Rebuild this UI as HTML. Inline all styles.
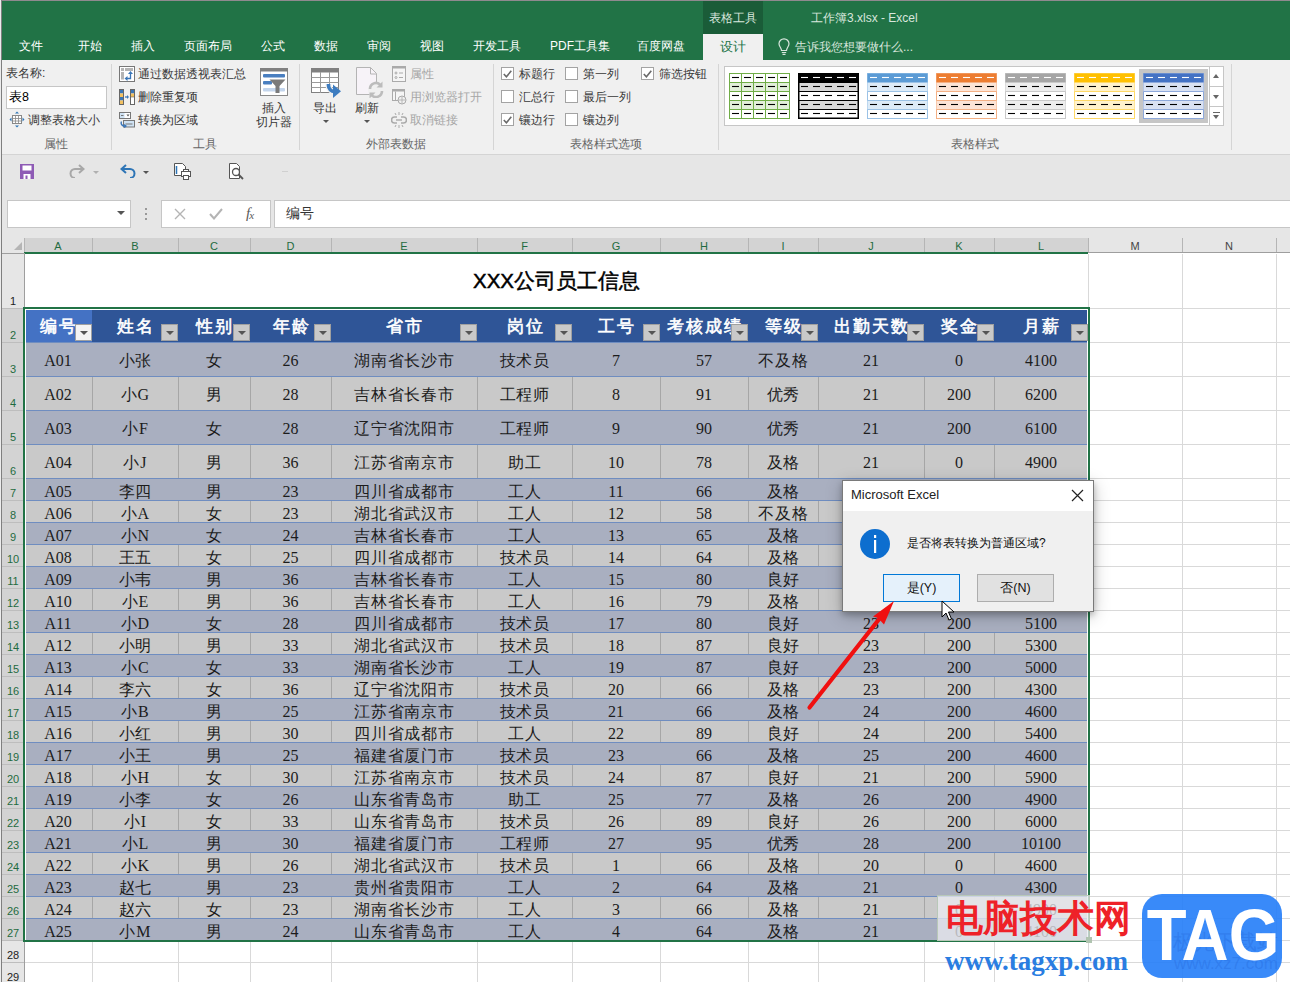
<!DOCTYPE html>
<html><head><meta charset="utf-8"><style>
*{box-sizing:border-box}
body{margin:0;width:1290px;height:982px;overflow:hidden;position:relative;background:#fff;font-family:"Liberation Sans",sans-serif;color:#262626}
.a{position:absolute}
.tab{position:absolute;top:38px;font-size:12px;color:#fff;white-space:nowrap;line-height:16px}
.rb{position:absolute;font-size:12px;color:#383838;white-space:nowrap;line-height:14px}
.gl{position:absolute;font-size:12px;color:#666;white-space:nowrap;line-height:14px}
.sep{position:absolute;top:64px;width:1px;height:86px;background:#d5d5d5}
.cb{position:absolute;width:13px;height:13px;border:1px solid #a3a3a3;background:#fff}
.rh{position:absolute;left:2px;width:22px;font-size:11px;text-align:center;line-height:12px}
.ch{position:absolute;top:239px;height:14px;font-size:11px;text-align:center;line-height:14px}
.cell{position:absolute;text-align:center;font-family:"Liberation Serif",serif;font-size:16px;color:#1c1c1c;white-space:nowrap;overflow:hidden}
.hd{position:absolute;text-align:center;font-size:16.5px;font-weight:normal;-webkit-text-stroke:0.6px #fff;color:#fff;white-space:nowrap;letter-spacing:2px}
.fb{position:absolute;width:17px;height:17px;background:#c9c9c9;border:1px solid #a0a0a0}
.fb:after{content:"";position:absolute;left:4px;top:6px;border-left:4px solid transparent;border-right:4px solid transparent;border-top:4px solid #555}
</style></head><body>

<div class="a" style="left:0;top:0;width:1290px;height:1px;background:#8f8a8f"></div>
<div class="a" style="left:0;top:0;width:1px;height:982px;background:#ececec"></div>
<div class="a" style="left:1px;top:0;width:1px;height:982px;background:#7f7f7f"></div>
<div class="a" style="left:2px;top:1px;width:1288px;height:59px;background:#217346"></div>
<div class="a" style="left:703px;top:1px;width:60px;height:33px;background:#1a5c38"></div>
<div class="a" style="left:703px;top:34px;width:60px;height:27px;background:#f0f0f0"></div>
<div class="a" style="left:703px;top:10px;width:60px;text-align:center;font-size:12px;color:#d8e6dd;line-height:16px">表格工具</div>
<div class="a" style="left:811px;top:10px;font-size:12px;color:#d8e6dd;line-height:16px;white-space:nowrap">工作簿3.xlsx - Excel</div>
<div class="tab" style="left:19px">文件</div>
<div class="tab" style="left:78px">开始</div>
<div class="tab" style="left:131px">插入</div>
<div class="tab" style="left:184px">页面布局</div>
<div class="tab" style="left:261px">公式</div>
<div class="tab" style="left:314px">数据</div>
<div class="tab" style="left:367px">审阅</div>
<div class="tab" style="left:420px">视图</div>
<div class="tab" style="left:473px">开发工具</div>
<div class="tab" style="left:550px">PDF工具集</div>
<div class="tab" style="left:637px">百度网盘</div>
<div class="a" style="left:703px;top:39px;width:60px;text-align:center;font-size:12.5px;color:#217346;line-height:16px">设计</div>
<svg class="a" style="left:777px;top:38px" width="14" height="18" viewBox="0 0 14 18"><path d="M4.5 12.5 C4.5 10 2 8.5 2 5.8 A5 5 0 0 1 12 5.8 C12 8.5 9.5 10 9.5 12.5 Z" fill="none" stroke="#d8e6dd" stroke-width="1.2"/><path d="M4.8 14.5h4.4M5.5 16.3h3" stroke="#d8e6dd" stroke-width="1.2"/></svg>
<div class="a" style="left:795px;top:39px;font-size:12px;color:#d8e6dd;line-height:16px;white-space:nowrap">告诉我您想要做什么...</div>
<div class="a" style="left:2px;top:60px;width:1288px;height:94px;background:#f0f0f0"></div>
<div class="a" style="left:2px;top:154px;width:1288px;height:1px;background:#d4d4d4"></div>
<div class="rb" style="left:6px;top:66px">表名称:</div>
<div class="a" style="left:6px;top:86px;width:101px;height:23px;background:#fff;border:1px solid #c6c6c6"></div>
<div class="a" style="left:9px;top:90px;font-size:12.5px;color:#000;line-height:14px">表8</div>
<svg class="a" style="left:9px;top:111px" width="16" height="17" viewBox="0 0 16 17"><rect x="3.5" y="4.5" width="9" height="8" fill="#fff" stroke="#888"/><path d="M3.5 7.5h9M3.5 10h9M6.5 4.5v8M9.5 4.5v8" stroke="#888" stroke-width="0.8"/><path d="M8 0.5l-2 2h4zM8 16.5l-2-2h4zM0.5 8.5l2-2v4zM15.5 8.5l-2-2v4z" fill="#2e75b6"/></svg>
<div class="rb" style="left:28px;top:113px">调整表格大小</div>
<div class="gl" style="left:44px;top:137px">属性</div>
<div class="sep" style="left:111px"></div>
<svg class="a" style="left:119px;top:66px" width="16" height="16" viewBox="0 0 16 16"><rect x="0.5" y="0.5" width="15" height="15" fill="#fff" stroke="#777"/><rect x="2" y="2" width="3" height="3" fill="#b4b4b4"/><rect x="6" y="2" width="8" height="3" fill="#b4b4b4"/><rect x="2" y="6" width="3" height="7.5" fill="#b4b4b4"/><path d="M7.5 12.5h4v-5" stroke="#3a76b8" stroke-width="1.3" fill="none"/><path d="M5.5 12.5l3-2.5v5z" fill="#3a76b8"/><path d="M11.5 5l-2.5 3h5z" fill="#3a76b8"/></svg>
<div class="rb" style="left:138px;top:67px">通过数据透视表汇总</div>
<svg class="a" style="left:119px;top:89px" width="16" height="16" viewBox="0 0 16 16"><rect x="0.5" y="0.5" width="4" height="15" fill="#fff" stroke="#666"/><rect x="1" y="1" width="3" height="3.5" fill="#3a76b8"/><rect x="1" y="4.5" width="3" height="3.5" fill="#f2c060"/><rect x="1" y="8" width="3" height="3.5" fill="#3a76b8"/><rect x="1" y="11.5" width="3" height="3.5" fill="#f2c060"/><rect x="11.5" y="0.5" width="4" height="15" fill="#fff" stroke="#666"/><rect x="12" y="1" width="3" height="3.5" fill="#3a76b8"/><rect x="12" y="4.5" width="3" height="3.5" fill="#f2c060"/><path d="M11.5 8h4" stroke="#666" stroke-width="0.6"/><path d="M6 8h3" stroke="#3a76b8" stroke-width="1.3"/><path d="M10 8l-2-2v4z" fill="#3a76b8"/></svg>
<div class="rb" style="left:138px;top:90px">删除重复项</div>
<svg class="a" style="left:119px;top:112px" width="16" height="16" viewBox="0 0 16 16"><rect x="0.5" y="0.5" width="11" height="6" fill="#fff" stroke="#777"/><rect x="1" y="1" width="4.5" height="5" fill="#cfe2f3"/><path d="M2 3.5h2.5" stroke="#777"/><path d="M7.5 2.5h3l-1.5 2z" fill="#555"/><rect x="4.5" y="8.5" width="11" height="6.5" fill="#cfe2f3" stroke="#777"/><path d="M6.5 12h7" stroke="#777"/><path d="M2.5 9.5a3 3 0 0 0 2.5 4.5h1" stroke="#3a76b8" stroke-width="1.4" fill="none"/><path d="M8 14l-2.8-2.3v4.6z" fill="#3a76b8"/></svg>
<div class="rb" style="left:138px;top:113px">转换为区域</div>
<svg class="a" style="left:260px;top:68px" width="28" height="28" viewBox="0 0 28 28"><rect x="0.5" y="0.5" width="27" height="27" fill="#fff" stroke="#888"/><rect x="0" y="0" width="28" height="3.5" fill="#808080"/><rect x="3" y="6" width="22" height="3.5" rx="1" fill="#4a7fc0"/><rect x="3" y="13" width="9" height="3.5" rx="1" fill="#4a7fc0"/><rect x="3" y="20" width="22" height="3.5" rx="1" fill="#c3d5ec"/><path d="M9.5 11.5h16l-6 6.5v7h-4v-7z" fill="#7a7a7a"/></svg>
<div class="rb" style="left:262px;top:101px">插入</div>
<div class="rb" style="left:256px;top:115px">切片器</div>
<div class="gl" style="left:193px;top:137px">工具</div>
<div class="sep" style="left:299px"></div>
<svg class="a" style="left:311px;top:68px" width="31" height="31" viewBox="0 0 31 31"><rect x="0.5" y="0.5" width="27" height="24" fill="#fff" stroke="#808080"/><rect x="0" y="0" width="28" height="4.5" fill="#808080"/><path d="M0.5 9.5h27M0.5 14.5h27M0.5 19.5h27M9.5 4v21M18.5 4v21" stroke="#9a9a9a"/><path d="M17.5 16v1.5a6 6 0 0 0 6 6h2" stroke="#f0f0f0" stroke-width="6" fill="none"/><path d="M17.5 16v1.5a6 6 0 0 0 6 6h2" stroke="#3d7cc0" stroke-width="3.6" fill="none"/><path d="M22 16.5L30 23.3L22 30z" fill="#3d7cc0"/></svg>
<div class="rb" style="left:313px;top:101px;color:#333">导出</div>
<div class="a" style="left:323px;top:120px;border-left:3px solid transparent;border-right:3px solid transparent;border-top:3px solid #555"></div>
<svg class="a" style="left:356px;top:67px" width="30" height="31" viewBox="0 0 30 31"><path d="M0.5 0.5h14l6 6v21h-20z" fill="#f7f3f8" stroke="#b4b4b4"/><path d="M14.5 0.5v6.5h6" fill="none" stroke="#b4b4b4"/><circle cx="20" cy="23" r="8" fill="#f0f0f0"/><path d="M14 22a6 6 0 0 1 10.5-4M26 24a6 6 0 0 1-10.5 4" stroke="#bcbcbc" stroke-width="2.6" fill="none"/><path d="M26.5 14.5v6h-6zM13.5 31.5v-6h6z" fill="#bcbcbc"/></svg>
<div class="rb" style="left:355px;top:101px;color:#333">刷新</div>
<div class="a" style="left:364px;top:120px;border-left:3px solid transparent;border-right:3px solid transparent;border-top:3px solid #555"></div>
<svg class="a" style="left:392px;top:66px" width="14" height="16" viewBox="0 0 14 16"><rect x="0.5" y="0.5" width="13" height="15" fill="#f5f5f5" stroke="#aaa"/><rect x="0.5" y="0.5" width="13" height="2" fill="#aaa"/><circle cx="4" cy="7" r="1" fill="none" stroke="#aaa"/><circle cx="4" cy="11.5" r="1" fill="none" stroke="#aaa"/><path d="M7 7h4M7 11.5h4" stroke="#aaa"/></svg>
<div class="rb" style="left:410px;top:67px;color:#a6a6a6">属性</div>
<svg class="a" style="left:392px;top:89px" width="15" height="16" viewBox="0 0 15 16"><rect x="0.5" y="0.5" width="12" height="11" fill="#f5f5f5" stroke="#aaa"/><rect x="0.5" y="0.5" width="12" height="2" fill="#aaa"/><path d="M3.5 2.5v9" stroke="#aaa"/><circle cx="10" cy="11" r="4" fill="#f0f0f0" stroke="#aaa"/><path d="M6.5 11h7M10 7.5v7" stroke="#aaa" stroke-width="0.8"/></svg>
<div class="rb" style="left:410px;top:90px;color:#a6a6a6">用浏览器打开</div>
<svg class="a" style="left:391px;top:112px" width="16" height="16" viewBox="0 0 16 16"><path d="M6 5H3.5a3 3 0 0 0 0 6H6M10 5h2.5a3 3 0 0 1 0 6H10" stroke="#aaa" stroke-width="1.6" fill="none"/><path d="M5 8h6" stroke="#aaa" stroke-width="1.4"/><path d="M8 0v3M8 13v3M4 1l1 2M12 1l-1 2M4 15l1-2M12 15l-1-2" stroke="#aaa"/></svg>
<div class="rb" style="left:410px;top:113px;color:#a6a6a6">取消链接</div>
<div class="gl" style="left:366px;top:137px">外部表数据</div>
<div class="sep" style="left:493px"></div>
<div class="cb" style="left:501px;top:67px"></div>
<svg class="a" style="left:503px;top:70px" width="9" height="8" viewBox="0 0 9 8"><path d="M0.8 4l2.6 2.8L8.3 0.8" stroke="#6a6a6a" stroke-width="1.6" fill="none"/></svg>
<div class="rb" style="left:519px;top:67px">标题行</div>
<div class="cb" style="left:501px;top:90px"></div>
<div class="rb" style="left:519px;top:90px">汇总行</div>
<div class="cb" style="left:501px;top:113px"></div>
<svg class="a" style="left:503px;top:116px" width="9" height="8" viewBox="0 0 9 8"><path d="M0.8 4l2.6 2.8L8.3 0.8" stroke="#6a6a6a" stroke-width="1.6" fill="none"/></svg>
<div class="rb" style="left:519px;top:113px">镶边行</div>
<div class="cb" style="left:565px;top:67px"></div>
<div class="rb" style="left:583px;top:67px">第一列</div>
<div class="cb" style="left:565px;top:90px"></div>
<div class="rb" style="left:583px;top:90px">最后一列</div>
<div class="cb" style="left:565px;top:113px"></div>
<div class="rb" style="left:583px;top:113px">镶边列</div>
<div class="cb" style="left:641px;top:67px"></div>
<svg class="a" style="left:643px;top:70px" width="9" height="8" viewBox="0 0 9 8"><path d="M0.8 4l2.6 2.8L8.3 0.8" stroke="#6a6a6a" stroke-width="1.6" fill="none"/></svg>
<div class="rb" style="left:659px;top:67px">筛选按钮</div>
<div class="gl" style="left:570px;top:137px">表格样式选项</div>
<div class="sep" style="left:718px"></div>
<div class="a" style="left:724px;top:66px;width:486px;height:60px;background:#fff;border:1px solid #c6c6c6"></div>
<div class="a" style="left:1139px;top:69px;width:69px;height:54px;background:#c6c6c6"></div>
<svg class="a" style="left:729px;top:73px" width="61" height="46" viewBox="0 0 61 46"><rect x="0.5" y="0.5" width="60" height="45" fill="#fff" stroke="#70ad47"/><path d="M3 4.5h7" stroke="#000" stroke-width="1.1"/><path d="M15 4.5h7" stroke="#000" stroke-width="1.1"/><path d="M27 4.5h7" stroke="#000" stroke-width="1.1"/><path d="M39 4.5h7" stroke="#000" stroke-width="1.1"/><path d="M51 4.5h7" stroke="#000" stroke-width="1.1"/><rect x="0.5" y="9.5" width="60" height="9" fill="#e2efda"/><path d="M0.5 9.5h60" stroke="#70ad47"/><path d="M3 13.5h7" stroke="#000" stroke-width="1.1"/><path d="M15 13.5h7" stroke="#000" stroke-width="1.1"/><path d="M27 13.5h7" stroke="#000" stroke-width="1.1"/><path d="M39 13.5h7" stroke="#000" stroke-width="1.1"/><path d="M51 13.5h7" stroke="#000" stroke-width="1.1"/><path d="M0.5 18.5h60" stroke="#70ad47"/><path d="M3 22.5h7" stroke="#000" stroke-width="1.1"/><path d="M15 22.5h7" stroke="#000" stroke-width="1.1"/><path d="M27 22.5h7" stroke="#000" stroke-width="1.1"/><path d="M39 22.5h7" stroke="#000" stroke-width="1.1"/><path d="M51 22.5h7" stroke="#000" stroke-width="1.1"/><rect x="0.5" y="27.5" width="60" height="9" fill="#e2efda"/><path d="M0.5 27.5h60" stroke="#70ad47"/><path d="M3 31.5h7" stroke="#000" stroke-width="1.1"/><path d="M15 31.5h7" stroke="#000" stroke-width="1.1"/><path d="M27 31.5h7" stroke="#000" stroke-width="1.1"/><path d="M39 31.5h7" stroke="#000" stroke-width="1.1"/><path d="M51 31.5h7" stroke="#000" stroke-width="1.1"/><path d="M0.5 36.5h60" stroke="#70ad47"/><path d="M3 40.5h7" stroke="#000" stroke-width="1.1"/><path d="M15 40.5h7" stroke="#000" stroke-width="1.1"/><path d="M27 40.5h7" stroke="#000" stroke-width="1.1"/><path d="M39 40.5h7" stroke="#000" stroke-width="1.1"/><path d="M51 40.5h7" stroke="#000" stroke-width="1.1"/><path d="M12.5 0v46" stroke="#70ad47"/><path d="M24.5 0v46" stroke="#70ad47"/><path d="M36.5 0v46" stroke="#70ad47"/><path d="M48.5 0v46" stroke="#70ad47"/><rect x="0.5" y="0.5" width="60" height="45" fill="none" stroke="#70ad47"/></svg>
<svg class="a" style="left:798px;top:73px" width="61" height="46" viewBox="0 0 61 46"><rect x="0.5" y="0.5" width="60" height="45" fill="#fff" stroke="#000"/><rect x="0.5" y="0.5" width="60" height="9" fill="#000000"/><path d="M3 4.5h7" stroke="#fff" stroke-width="1.1"/><path d="M15 4.5h7" stroke="#fff" stroke-width="1.1"/><path d="M27 4.5h7" stroke="#fff" stroke-width="1.1"/><path d="M39 4.5h7" stroke="#fff" stroke-width="1.1"/><path d="M51 4.5h7" stroke="#fff" stroke-width="1.1"/><rect x="0.5" y="9.5" width="60" height="9" fill="#d9d9d9"/><path d="M0.5 9.5h60" stroke="#000"/><path d="M3 13.5h7" stroke="#000" stroke-width="1.1"/><path d="M15 13.5h7" stroke="#000" stroke-width="1.1"/><path d="M27 13.5h7" stroke="#000" stroke-width="1.1"/><path d="M39 13.5h7" stroke="#000" stroke-width="1.1"/><path d="M51 13.5h7" stroke="#000" stroke-width="1.1"/><path d="M0.5 18.5h60" stroke="#000"/><path d="M3 22.5h7" stroke="#000" stroke-width="1.1"/><path d="M15 22.5h7" stroke="#000" stroke-width="1.1"/><path d="M27 22.5h7" stroke="#000" stroke-width="1.1"/><path d="M39 22.5h7" stroke="#000" stroke-width="1.1"/><path d="M51 22.5h7" stroke="#000" stroke-width="1.1"/><rect x="0.5" y="27.5" width="60" height="9" fill="#d9d9d9"/><path d="M0.5 27.5h60" stroke="#000"/><path d="M3 31.5h7" stroke="#000" stroke-width="1.1"/><path d="M15 31.5h7" stroke="#000" stroke-width="1.1"/><path d="M27 31.5h7" stroke="#000" stroke-width="1.1"/><path d="M39 31.5h7" stroke="#000" stroke-width="1.1"/><path d="M51 31.5h7" stroke="#000" stroke-width="1.1"/><path d="M0.5 36.5h60" stroke="#000"/><path d="M3 40.5h7" stroke="#000" stroke-width="1.1"/><path d="M15 40.5h7" stroke="#000" stroke-width="1.1"/><path d="M27 40.5h7" stroke="#000" stroke-width="1.1"/><path d="M39 40.5h7" stroke="#000" stroke-width="1.1"/><path d="M51 40.5h7" stroke="#000" stroke-width="1.1"/><rect x="0.75" y="0.75" width="59.5" height="44.5" fill="none" stroke="#000" stroke-width="1.5"/></svg>
<svg class="a" style="left:867px;top:73px" width="61" height="46" viewBox="0 0 61 46"><rect x="0.5" y="0.5" width="60" height="45" fill="#fff" stroke="#9bc2e6"/><rect x="0.5" y="0.5" width="60" height="9" fill="#5b9bd5"/><path d="M3 4.5h7" stroke="#fff" stroke-width="1.1"/><path d="M15 4.5h7" stroke="#fff" stroke-width="1.1"/><path d="M27 4.5h7" stroke="#fff" stroke-width="1.1"/><path d="M39 4.5h7" stroke="#fff" stroke-width="1.1"/><path d="M51 4.5h7" stroke="#fff" stroke-width="1.1"/><rect x="0.5" y="9.5" width="60" height="9" fill="#ddebf7"/><path d="M0.5 9.5h60" stroke="#9bc2e6"/><path d="M3 13.5h7" stroke="#000" stroke-width="1.1"/><path d="M15 13.5h7" stroke="#000" stroke-width="1.1"/><path d="M27 13.5h7" stroke="#000" stroke-width="1.1"/><path d="M39 13.5h7" stroke="#000" stroke-width="1.1"/><path d="M51 13.5h7" stroke="#000" stroke-width="1.1"/><path d="M0.5 18.5h60" stroke="#9bc2e6"/><path d="M3 22.5h7" stroke="#000" stroke-width="1.1"/><path d="M15 22.5h7" stroke="#000" stroke-width="1.1"/><path d="M27 22.5h7" stroke="#000" stroke-width="1.1"/><path d="M39 22.5h7" stroke="#000" stroke-width="1.1"/><path d="M51 22.5h7" stroke="#000" stroke-width="1.1"/><rect x="0.5" y="27.5" width="60" height="9" fill="#ddebf7"/><path d="M0.5 27.5h60" stroke="#9bc2e6"/><path d="M3 31.5h7" stroke="#000" stroke-width="1.1"/><path d="M15 31.5h7" stroke="#000" stroke-width="1.1"/><path d="M27 31.5h7" stroke="#000" stroke-width="1.1"/><path d="M39 31.5h7" stroke="#000" stroke-width="1.1"/><path d="M51 31.5h7" stroke="#000" stroke-width="1.1"/><path d="M0.5 36.5h60" stroke="#9bc2e6"/><path d="M3 40.5h7" stroke="#000" stroke-width="1.1"/><path d="M15 40.5h7" stroke="#000" stroke-width="1.1"/><path d="M27 40.5h7" stroke="#000" stroke-width="1.1"/><path d="M39 40.5h7" stroke="#000" stroke-width="1.1"/><path d="M51 40.5h7" stroke="#000" stroke-width="1.1"/></svg>
<svg class="a" style="left:936px;top:73px" width="61" height="46" viewBox="0 0 61 46"><rect x="0.5" y="0.5" width="60" height="45" fill="#fff" stroke="#f4b084"/><rect x="0.5" y="0.5" width="60" height="9" fill="#ed7d31"/><path d="M3 4.5h7" stroke="#fff" stroke-width="1.1"/><path d="M15 4.5h7" stroke="#fff" stroke-width="1.1"/><path d="M27 4.5h7" stroke="#fff" stroke-width="1.1"/><path d="M39 4.5h7" stroke="#fff" stroke-width="1.1"/><path d="M51 4.5h7" stroke="#fff" stroke-width="1.1"/><rect x="0.5" y="9.5" width="60" height="9" fill="#fce4d6"/><path d="M0.5 9.5h60" stroke="#f4b084"/><path d="M3 13.5h7" stroke="#000" stroke-width="1.1"/><path d="M15 13.5h7" stroke="#000" stroke-width="1.1"/><path d="M27 13.5h7" stroke="#000" stroke-width="1.1"/><path d="M39 13.5h7" stroke="#000" stroke-width="1.1"/><path d="M51 13.5h7" stroke="#000" stroke-width="1.1"/><path d="M0.5 18.5h60" stroke="#f4b084"/><path d="M3 22.5h7" stroke="#000" stroke-width="1.1"/><path d="M15 22.5h7" stroke="#000" stroke-width="1.1"/><path d="M27 22.5h7" stroke="#000" stroke-width="1.1"/><path d="M39 22.5h7" stroke="#000" stroke-width="1.1"/><path d="M51 22.5h7" stroke="#000" stroke-width="1.1"/><rect x="0.5" y="27.5" width="60" height="9" fill="#fce4d6"/><path d="M0.5 27.5h60" stroke="#f4b084"/><path d="M3 31.5h7" stroke="#000" stroke-width="1.1"/><path d="M15 31.5h7" stroke="#000" stroke-width="1.1"/><path d="M27 31.5h7" stroke="#000" stroke-width="1.1"/><path d="M39 31.5h7" stroke="#000" stroke-width="1.1"/><path d="M51 31.5h7" stroke="#000" stroke-width="1.1"/><path d="M0.5 36.5h60" stroke="#f4b084"/><path d="M3 40.5h7" stroke="#000" stroke-width="1.1"/><path d="M15 40.5h7" stroke="#000" stroke-width="1.1"/><path d="M27 40.5h7" stroke="#000" stroke-width="1.1"/><path d="M39 40.5h7" stroke="#000" stroke-width="1.1"/><path d="M51 40.5h7" stroke="#000" stroke-width="1.1"/></svg>
<svg class="a" style="left:1005px;top:73px" width="61" height="46" viewBox="0 0 61 46"><rect x="0.5" y="0.5" width="60" height="45" fill="#fff" stroke="#c9c9c9"/><rect x="0.5" y="0.5" width="60" height="9" fill="#a5a5a5"/><path d="M3 4.5h7" stroke="#fff" stroke-width="1.1"/><path d="M15 4.5h7" stroke="#fff" stroke-width="1.1"/><path d="M27 4.5h7" stroke="#fff" stroke-width="1.1"/><path d="M39 4.5h7" stroke="#fff" stroke-width="1.1"/><path d="M51 4.5h7" stroke="#fff" stroke-width="1.1"/><rect x="0.5" y="9.5" width="60" height="9" fill="#ededed"/><path d="M0.5 9.5h60" stroke="#c9c9c9"/><path d="M3 13.5h7" stroke="#000" stroke-width="1.1"/><path d="M15 13.5h7" stroke="#000" stroke-width="1.1"/><path d="M27 13.5h7" stroke="#000" stroke-width="1.1"/><path d="M39 13.5h7" stroke="#000" stroke-width="1.1"/><path d="M51 13.5h7" stroke="#000" stroke-width="1.1"/><path d="M0.5 18.5h60" stroke="#c9c9c9"/><path d="M3 22.5h7" stroke="#000" stroke-width="1.1"/><path d="M15 22.5h7" stroke="#000" stroke-width="1.1"/><path d="M27 22.5h7" stroke="#000" stroke-width="1.1"/><path d="M39 22.5h7" stroke="#000" stroke-width="1.1"/><path d="M51 22.5h7" stroke="#000" stroke-width="1.1"/><rect x="0.5" y="27.5" width="60" height="9" fill="#ededed"/><path d="M0.5 27.5h60" stroke="#c9c9c9"/><path d="M3 31.5h7" stroke="#000" stroke-width="1.1"/><path d="M15 31.5h7" stroke="#000" stroke-width="1.1"/><path d="M27 31.5h7" stroke="#000" stroke-width="1.1"/><path d="M39 31.5h7" stroke="#000" stroke-width="1.1"/><path d="M51 31.5h7" stroke="#000" stroke-width="1.1"/><path d="M0.5 36.5h60" stroke="#c9c9c9"/><path d="M3 40.5h7" stroke="#000" stroke-width="1.1"/><path d="M15 40.5h7" stroke="#000" stroke-width="1.1"/><path d="M27 40.5h7" stroke="#000" stroke-width="1.1"/><path d="M39 40.5h7" stroke="#000" stroke-width="1.1"/><path d="M51 40.5h7" stroke="#000" stroke-width="1.1"/></svg>
<svg class="a" style="left:1074px;top:73px" width="61" height="46" viewBox="0 0 61 46"><rect x="0.5" y="0.5" width="60" height="45" fill="#fff" stroke="#ffd966"/><rect x="0.5" y="0.5" width="60" height="9" fill="#ffc000"/><path d="M3 4.5h7" stroke="#fff" stroke-width="1.1"/><path d="M15 4.5h7" stroke="#fff" stroke-width="1.1"/><path d="M27 4.5h7" stroke="#fff" stroke-width="1.1"/><path d="M39 4.5h7" stroke="#fff" stroke-width="1.1"/><path d="M51 4.5h7" stroke="#fff" stroke-width="1.1"/><rect x="0.5" y="9.5" width="60" height="9" fill="#fff2cc"/><path d="M0.5 9.5h60" stroke="#ffd966"/><path d="M3 13.5h7" stroke="#000" stroke-width="1.1"/><path d="M15 13.5h7" stroke="#000" stroke-width="1.1"/><path d="M27 13.5h7" stroke="#000" stroke-width="1.1"/><path d="M39 13.5h7" stroke="#000" stroke-width="1.1"/><path d="M51 13.5h7" stroke="#000" stroke-width="1.1"/><path d="M0.5 18.5h60" stroke="#ffd966"/><path d="M3 22.5h7" stroke="#000" stroke-width="1.1"/><path d="M15 22.5h7" stroke="#000" stroke-width="1.1"/><path d="M27 22.5h7" stroke="#000" stroke-width="1.1"/><path d="M39 22.5h7" stroke="#000" stroke-width="1.1"/><path d="M51 22.5h7" stroke="#000" stroke-width="1.1"/><rect x="0.5" y="27.5" width="60" height="9" fill="#fff2cc"/><path d="M0.5 27.5h60" stroke="#ffd966"/><path d="M3 31.5h7" stroke="#000" stroke-width="1.1"/><path d="M15 31.5h7" stroke="#000" stroke-width="1.1"/><path d="M27 31.5h7" stroke="#000" stroke-width="1.1"/><path d="M39 31.5h7" stroke="#000" stroke-width="1.1"/><path d="M51 31.5h7" stroke="#000" stroke-width="1.1"/><path d="M0.5 36.5h60" stroke="#ffd966"/><path d="M3 40.5h7" stroke="#000" stroke-width="1.1"/><path d="M15 40.5h7" stroke="#000" stroke-width="1.1"/><path d="M27 40.5h7" stroke="#000" stroke-width="1.1"/><path d="M39 40.5h7" stroke="#000" stroke-width="1.1"/><path d="M51 40.5h7" stroke="#000" stroke-width="1.1"/></svg>
<svg class="a" style="left:1143px;top:73px" width="61" height="46" viewBox="0 0 61 46"><rect x="0.5" y="0.5" width="60" height="45" fill="#fff" stroke="#8ea9db"/><rect x="0.5" y="0.5" width="60" height="9" fill="#4472c4"/><path d="M3 4.5h7" stroke="#fff" stroke-width="1.1"/><path d="M15 4.5h7" stroke="#fff" stroke-width="1.1"/><path d="M27 4.5h7" stroke="#fff" stroke-width="1.1"/><path d="M39 4.5h7" stroke="#fff" stroke-width="1.1"/><path d="M51 4.5h7" stroke="#fff" stroke-width="1.1"/><rect x="0.5" y="9.5" width="60" height="9" fill="#d9e1f2"/><path d="M0.5 9.5h60" stroke="#8ea9db"/><path d="M3 13.5h7" stroke="#000" stroke-width="1.1"/><path d="M15 13.5h7" stroke="#000" stroke-width="1.1"/><path d="M27 13.5h7" stroke="#000" stroke-width="1.1"/><path d="M39 13.5h7" stroke="#000" stroke-width="1.1"/><path d="M51 13.5h7" stroke="#000" stroke-width="1.1"/><path d="M0.5 18.5h60" stroke="#8ea9db"/><path d="M3 22.5h7" stroke="#000" stroke-width="1.1"/><path d="M15 22.5h7" stroke="#000" stroke-width="1.1"/><path d="M27 22.5h7" stroke="#000" stroke-width="1.1"/><path d="M39 22.5h7" stroke="#000" stroke-width="1.1"/><path d="M51 22.5h7" stroke="#000" stroke-width="1.1"/><rect x="0.5" y="27.5" width="60" height="9" fill="#d9e1f2"/><path d="M0.5 27.5h60" stroke="#8ea9db"/><path d="M3 31.5h7" stroke="#000" stroke-width="1.1"/><path d="M15 31.5h7" stroke="#000" stroke-width="1.1"/><path d="M27 31.5h7" stroke="#000" stroke-width="1.1"/><path d="M39 31.5h7" stroke="#000" stroke-width="1.1"/><path d="M51 31.5h7" stroke="#000" stroke-width="1.1"/><path d="M0.5 36.5h60" stroke="#8ea9db"/><path d="M3 40.5h7" stroke="#000" stroke-width="1.1"/><path d="M15 40.5h7" stroke="#000" stroke-width="1.1"/><path d="M27 40.5h7" stroke="#000" stroke-width="1.1"/><path d="M39 40.5h7" stroke="#000" stroke-width="1.1"/><path d="M51 40.5h7" stroke="#000" stroke-width="1.1"/></svg>
<div class="a" style="left:1209px;top:66px;width:15px;height:60px;background:#fff;border:1px solid #c6c6c6"></div>
<div class="a" style="left:1209px;top:86px;width:15px;height:1px;background:#c6c6c6"></div>
<div class="a" style="left:1209px;top:106px;width:15px;height:1px;background:#c6c6c6"></div>
<div class="a" style="left:1213px;top:74px;border-left:3.5px solid transparent;border-right:3.5px solid transparent;border-bottom:4px solid #666"></div>
<div class="a" style="left:1213px;top:95px;border-left:3.5px solid transparent;border-right:3.5px solid transparent;border-top:4px solid #666"></div>
<div class="a" style="left:1213px;top:112px;width:7px;height:1px;background:#666"></div>
<div class="a" style="left:1213px;top:115px;border-left:3.5px solid transparent;border-right:3.5px solid transparent;border-top:4px solid #666"></div>
<div class="sep" style="left:1231px"></div>
<div class="gl" style="left:951px;top:137px">表格样式</div>
<div class="a" style="left:2px;top:155px;width:1288px;height:83px;background:#e6e6e6"></div>
<svg class="a" style="left:20px;top:164px" width="14" height="15" viewBox="0 0 14 15"><path d="M0 0h14v15H0z" fill="#8e5bb5"/><rect x="2.5" y="1.5" width="9" height="5" fill="#fff"/><rect x="3.5" y="10" width="7" height="5" fill="#fff"/><rect x="5.5" y="11.5" width="2" height="3.5" fill="#8e5bb5"/></svg>
<svg class="a" style="left:69px;top:164px" width="16" height="14" viewBox="0 0 16 14"><path d="M14 5H6a4.5 4.5 0 0 0 0 9" stroke="#a8a8a8" stroke-width="2" fill="none"/><path d="M10 1l4.5 4-4.5 4" stroke="#a8a8a8" stroke-width="2" fill="none"/></svg>
<div class="a" style="left:93px;top:171px;border-left:3px solid transparent;border-right:3px solid transparent;border-top:3px solid #b0b0b0"></div>
<svg class="a" style="left:120px;top:164px" width="16" height="14" viewBox="0 0 16 14"><path d="M2 5h8a4.5 4.5 0 0 1 0 9" stroke="#2e75b6" stroke-width="2" fill="none"/><path d="M6 1L1.5 5 6 9" stroke="#2e75b6" stroke-width="2" fill="none"/></svg>
<div class="a" style="left:143px;top:171px;border-left:3px solid transparent;border-right:3px solid transparent;border-top:3px solid #555"></div>
<svg class="a" style="left:174px;top:163px" width="17" height="17" viewBox="0 0 17 17"><path d="M0.5 0.5h8l3 3v9h-11z" fill="#fff" stroke="#555"/><path d="M2.5 3v8" stroke="#2e75b6" stroke-width="1.5"/><rect x="7.5" y="8.5" width="9" height="5" fill="#fff" stroke="#555"/><rect x="9.5" y="6.5" width="5" height="2" fill="#fff" stroke="#555"/><rect x="9.5" y="12.5" width="5" height="4" fill="#fff" stroke="#555"/></svg>
<svg class="a" style="left:229px;top:163px" width="15" height="17" viewBox="0 0 15 17"><path d="M0.5 0.5h7l3 3v12h-10z" fill="#fff" stroke="#555"/><circle cx="7" cy="9" r="3.5" fill="#fff" stroke="#555" stroke-width="1.3"/><path d="M9.5 11.5l4.5 4.5" stroke="#555" stroke-width="1.8"/></svg>
<div class="a" style="left:282px;top:171px;width:6px;height:1px;background:#d0d0d0"></div>
<div class="a" style="left:7px;top:200px;width:124px;height:28px;background:#fff;border:1px solid #c6c6c6"></div>
<div class="a" style="left:117px;top:211px;border-left:4px solid transparent;border-right:4px solid transparent;border-top:4px solid #555"></div>
<div class="a" style="left:145px;top:208px;width:2px;height:2px;background:#999"></div>
<div class="a" style="left:145px;top:213px;width:2px;height:2px;background:#999"></div>
<div class="a" style="left:145px;top:218px;width:2px;height:2px;background:#999"></div>
<div class="a" style="left:161px;top:200px;width:110px;height:28px;background:#fff;border:1px solid #c6c6c6"></div>
<svg class="a" style="left:174px;top:208px" width="12" height="12" viewBox="0 0 12 12"><path d="M1 1l10 10M11 1L1 11" stroke="#b4b4b4" stroke-width="1.4"/></svg>
<svg class="a" style="left:209px;top:208px" width="14" height="12" viewBox="0 0 14 12"><path d="M1 6l4 4.5L13 1" stroke="#b4b4b4" stroke-width="2" fill="none"/></svg>
<div class="a" style="left:246px;top:204px;font-family:'Liberation Serif',serif;font-style:italic;font-size:15px;color:#5a5a5a;line-height:18px">f<span style="font-size:11px;position:relative;top:1px;left:-1px">x</span></div>
<div class="a" style="left:274px;top:200px;width:1016px;height:28px;background:#fff;border:1px solid #c6c6c6;border-right:none"></div>
<div class="a" style="left:286px;top:204px;font-size:14px;color:#333;line-height:18px">编号</div>
<div class="a" style="left:2px;top:238px;width:1288px;height:15px;background:#e6e6e6"></div>
<div class="a" style="left:25px;top:238px;width:1063px;height:14px;background:#d3d3d3"></div>
<div class="a" style="left:14px;top:242px;width:0;height:0;border-left:8px solid transparent;border-bottom:8px solid #b5b5b5"></div>
<div class="ch" style="left:24px;width:68px;color:#1f6b40">A</div>
<div class="a" style="left:92px;top:238px;width:1px;height:14px;background:#b5b5b5"></div>
<div class="ch" style="left:92px;width:86px;color:#1f6b40">B</div>
<div class="a" style="left:178px;top:238px;width:1px;height:14px;background:#b5b5b5"></div>
<div class="ch" style="left:178px;width:72px;color:#1f6b40">C</div>
<div class="a" style="left:250px;top:238px;width:1px;height:14px;background:#b5b5b5"></div>
<div class="ch" style="left:250px;width:81px;color:#1f6b40">D</div>
<div class="a" style="left:331px;top:238px;width:1px;height:14px;background:#b5b5b5"></div>
<div class="ch" style="left:331px;width:146px;color:#1f6b40">E</div>
<div class="a" style="left:477px;top:238px;width:1px;height:14px;background:#b5b5b5"></div>
<div class="ch" style="left:477px;width:95px;color:#1f6b40">F</div>
<div class="a" style="left:572px;top:238px;width:1px;height:14px;background:#b5b5b5"></div>
<div class="ch" style="left:572px;width:88px;color:#1f6b40">G</div>
<div class="a" style="left:660px;top:238px;width:1px;height:14px;background:#b5b5b5"></div>
<div class="ch" style="left:660px;width:88px;color:#1f6b40">H</div>
<div class="a" style="left:748px;top:238px;width:1px;height:14px;background:#b5b5b5"></div>
<div class="ch" style="left:748px;width:70px;color:#1f6b40">I</div>
<div class="a" style="left:818px;top:238px;width:1px;height:14px;background:#b5b5b5"></div>
<div class="ch" style="left:818px;width:106px;color:#1f6b40">J</div>
<div class="a" style="left:924px;top:238px;width:1px;height:14px;background:#b5b5b5"></div>
<div class="ch" style="left:924px;width:70px;color:#1f6b40">K</div>
<div class="a" style="left:994px;top:238px;width:1px;height:14px;background:#b5b5b5"></div>
<div class="ch" style="left:994px;width:94px;color:#1f6b40">L</div>
<div class="a" style="left:1088px;top:238px;width:1px;height:14px;background:#b5b5b5"></div>
<div class="ch" style="left:1088px;width:94px;color:#444">M</div>
<div class="a" style="left:1182px;top:238px;width:1px;height:14px;background:#b5b5b5"></div>
<div class="ch" style="left:1182px;width:94px;color:#444">N</div>
<div class="a" style="left:1276px;top:238px;width:1px;height:14px;background:#b5b5b5"></div>
<div class="a" style="left:24px;top:238px;width:1px;height:14px;background:#b5b5b5"></div>
<div class="a" style="left:24px;top:252px;width:1064px;height:2px;background:#217346"></div>
<div class="a" style="left:1088px;top:252px;width:202px;height:1px;background:#9e9e9e"></div>
<div class="a" style="left:2px;top:253px;width:22px;height:729px;background:#e6e6e6"></div>
<div class="a" style="left:2px;top:253px;width:22px;height:1px;background:#9e9e9e"></div>
<div class="a" style="left:2px;top:308px;width:22px;height:632px;background:#d3d3d3"></div>
<div class="a" style="left:24px;top:253px;width:1px;height:729px;background:#9e9e9e"></div>
<div class="rh" style="top:295px;color:#222">1</div>
<div class="a" style="left:2px;top:308px;width:22px;height:1px;background:#bdbdbd"></div>
<div class="rh" style="top:329px;color:#1f6b40">2</div>
<div class="a" style="left:2px;top:342px;width:22px;height:1px;background:#bdbdbd"></div>
<div class="rh" style="top:363px;color:#1f6b40">3</div>
<div class="a" style="left:2px;top:376px;width:22px;height:1px;background:#bdbdbd"></div>
<div class="rh" style="top:397px;color:#1f6b40">4</div>
<div class="a" style="left:2px;top:410px;width:22px;height:1px;background:#bdbdbd"></div>
<div class="rh" style="top:431px;color:#1f6b40">5</div>
<div class="a" style="left:2px;top:444px;width:22px;height:1px;background:#bdbdbd"></div>
<div class="rh" style="top:465px;color:#1f6b40">6</div>
<div class="a" style="left:2px;top:478px;width:22px;height:1px;background:#bdbdbd"></div>
<div class="rh" style="top:487px;color:#1f6b40">7</div>
<div class="a" style="left:2px;top:500px;width:22px;height:1px;background:#bdbdbd"></div>
<div class="rh" style="top:509px;color:#1f6b40">8</div>
<div class="a" style="left:2px;top:522px;width:22px;height:1px;background:#bdbdbd"></div>
<div class="rh" style="top:531px;color:#1f6b40">9</div>
<div class="a" style="left:2px;top:544px;width:22px;height:1px;background:#bdbdbd"></div>
<div class="rh" style="top:553px;color:#1f6b40">10</div>
<div class="a" style="left:2px;top:566px;width:22px;height:1px;background:#bdbdbd"></div>
<div class="rh" style="top:575px;color:#1f6b40">11</div>
<div class="a" style="left:2px;top:588px;width:22px;height:1px;background:#bdbdbd"></div>
<div class="rh" style="top:597px;color:#1f6b40">12</div>
<div class="a" style="left:2px;top:610px;width:22px;height:1px;background:#bdbdbd"></div>
<div class="rh" style="top:619px;color:#1f6b40">13</div>
<div class="a" style="left:2px;top:632px;width:22px;height:1px;background:#bdbdbd"></div>
<div class="rh" style="top:641px;color:#1f6b40">14</div>
<div class="a" style="left:2px;top:654px;width:22px;height:1px;background:#bdbdbd"></div>
<div class="rh" style="top:663px;color:#1f6b40">15</div>
<div class="a" style="left:2px;top:676px;width:22px;height:1px;background:#bdbdbd"></div>
<div class="rh" style="top:685px;color:#1f6b40">16</div>
<div class="a" style="left:2px;top:698px;width:22px;height:1px;background:#bdbdbd"></div>
<div class="rh" style="top:707px;color:#1f6b40">17</div>
<div class="a" style="left:2px;top:720px;width:22px;height:1px;background:#bdbdbd"></div>
<div class="rh" style="top:729px;color:#1f6b40">18</div>
<div class="a" style="left:2px;top:742px;width:22px;height:1px;background:#bdbdbd"></div>
<div class="rh" style="top:751px;color:#1f6b40">19</div>
<div class="a" style="left:2px;top:764px;width:22px;height:1px;background:#bdbdbd"></div>
<div class="rh" style="top:773px;color:#1f6b40">20</div>
<div class="a" style="left:2px;top:786px;width:22px;height:1px;background:#bdbdbd"></div>
<div class="rh" style="top:795px;color:#1f6b40">21</div>
<div class="a" style="left:2px;top:808px;width:22px;height:1px;background:#bdbdbd"></div>
<div class="rh" style="top:817px;color:#1f6b40">22</div>
<div class="a" style="left:2px;top:830px;width:22px;height:1px;background:#bdbdbd"></div>
<div class="rh" style="top:839px;color:#1f6b40">23</div>
<div class="a" style="left:2px;top:852px;width:22px;height:1px;background:#bdbdbd"></div>
<div class="rh" style="top:861px;color:#1f6b40">24</div>
<div class="a" style="left:2px;top:874px;width:22px;height:1px;background:#bdbdbd"></div>
<div class="rh" style="top:883px;color:#1f6b40">25</div>
<div class="a" style="left:2px;top:896px;width:22px;height:1px;background:#bdbdbd"></div>
<div class="rh" style="top:905px;color:#1f6b40">26</div>
<div class="a" style="left:2px;top:918px;width:22px;height:1px;background:#bdbdbd"></div>
<div class="rh" style="top:927px;color:#1f6b40">27</div>
<div class="a" style="left:2px;top:940px;width:22px;height:1px;background:#bdbdbd"></div>
<div class="rh" style="top:949px;color:#222">28</div>
<div class="a" style="left:2px;top:962px;width:22px;height:1px;background:#bdbdbd"></div>
<div class="rh" style="top:971px;color:#222">29</div>
<div class="a" style="left:2px;top:984px;width:22px;height:1px;background:#bdbdbd"></div>
<div class="a" style="left:25px;top:308px;width:1265px;height:1px;background:#d9d9d9"></div>
<div class="a" style="left:25px;top:342px;width:1265px;height:1px;background:#d9d9d9"></div>
<div class="a" style="left:25px;top:376px;width:1265px;height:1px;background:#d9d9d9"></div>
<div class="a" style="left:25px;top:410px;width:1265px;height:1px;background:#d9d9d9"></div>
<div class="a" style="left:25px;top:444px;width:1265px;height:1px;background:#d9d9d9"></div>
<div class="a" style="left:25px;top:478px;width:1265px;height:1px;background:#d9d9d9"></div>
<div class="a" style="left:25px;top:500px;width:1265px;height:1px;background:#d9d9d9"></div>
<div class="a" style="left:25px;top:522px;width:1265px;height:1px;background:#d9d9d9"></div>
<div class="a" style="left:25px;top:544px;width:1265px;height:1px;background:#d9d9d9"></div>
<div class="a" style="left:25px;top:566px;width:1265px;height:1px;background:#d9d9d9"></div>
<div class="a" style="left:25px;top:588px;width:1265px;height:1px;background:#d9d9d9"></div>
<div class="a" style="left:25px;top:610px;width:1265px;height:1px;background:#d9d9d9"></div>
<div class="a" style="left:25px;top:632px;width:1265px;height:1px;background:#d9d9d9"></div>
<div class="a" style="left:25px;top:654px;width:1265px;height:1px;background:#d9d9d9"></div>
<div class="a" style="left:25px;top:676px;width:1265px;height:1px;background:#d9d9d9"></div>
<div class="a" style="left:25px;top:698px;width:1265px;height:1px;background:#d9d9d9"></div>
<div class="a" style="left:25px;top:720px;width:1265px;height:1px;background:#d9d9d9"></div>
<div class="a" style="left:25px;top:742px;width:1265px;height:1px;background:#d9d9d9"></div>
<div class="a" style="left:25px;top:764px;width:1265px;height:1px;background:#d9d9d9"></div>
<div class="a" style="left:25px;top:786px;width:1265px;height:1px;background:#d9d9d9"></div>
<div class="a" style="left:25px;top:808px;width:1265px;height:1px;background:#d9d9d9"></div>
<div class="a" style="left:25px;top:830px;width:1265px;height:1px;background:#d9d9d9"></div>
<div class="a" style="left:25px;top:852px;width:1265px;height:1px;background:#d9d9d9"></div>
<div class="a" style="left:25px;top:874px;width:1265px;height:1px;background:#d9d9d9"></div>
<div class="a" style="left:25px;top:896px;width:1265px;height:1px;background:#d9d9d9"></div>
<div class="a" style="left:25px;top:918px;width:1265px;height:1px;background:#d9d9d9"></div>
<div class="a" style="left:25px;top:940px;width:1265px;height:1px;background:#d9d9d9"></div>
<div class="a" style="left:25px;top:962px;width:1265px;height:1px;background:#d9d9d9"></div>
<div class="a" style="left:25px;top:984px;width:1265px;height:1px;background:#d9d9d9"></div>
<div class="a" style="left:92px;top:254px;width:1px;height:728px;background:#d9d9d9"></div>
<div class="a" style="left:178px;top:254px;width:1px;height:728px;background:#d9d9d9"></div>
<div class="a" style="left:250px;top:254px;width:1px;height:728px;background:#d9d9d9"></div>
<div class="a" style="left:331px;top:254px;width:1px;height:728px;background:#d9d9d9"></div>
<div class="a" style="left:477px;top:254px;width:1px;height:728px;background:#d9d9d9"></div>
<div class="a" style="left:572px;top:254px;width:1px;height:728px;background:#d9d9d9"></div>
<div class="a" style="left:660px;top:254px;width:1px;height:728px;background:#d9d9d9"></div>
<div class="a" style="left:748px;top:254px;width:1px;height:728px;background:#d9d9d9"></div>
<div class="a" style="left:818px;top:254px;width:1px;height:728px;background:#d9d9d9"></div>
<div class="a" style="left:924px;top:254px;width:1px;height:728px;background:#d9d9d9"></div>
<div class="a" style="left:994px;top:254px;width:1px;height:728px;background:#d9d9d9"></div>
<div class="a" style="left:1088px;top:254px;width:1px;height:728px;background:#d9d9d9"></div>
<div class="a" style="left:1182px;top:254px;width:1px;height:728px;background:#d9d9d9"></div>
<div class="a" style="left:1276px;top:254px;width:1px;height:728px;background:#d9d9d9"></div>
<div class="a" style="left:25px;top:254px;width:1063px;height:54px;background:#fff"></div>
<div class="a" style="left:25px;top:269px;width:1063px;text-align:center;font-size:20.5px;font-weight:normal;color:#000;line-height:24px;-webkit-text-stroke:0.45px #000">XXX公司员工信息</div>
<div class="a" style="left:23px;top:307px;width:1067px;height:635px;border:2px solid #217346;background:#fff"></div>
<div class="a" style="left:26px;top:310px;width:1061px;height:32px;background:#2f5597"></div>
<div class="a" style="left:26px;top:310px;width:66px;height:32px;background:#4472c4"></div>
<div class="hd" style="left:25px;top:315px;width:68px;line-height:22px">编号</div>
<div class="fb" style="left:75px;top:324px;background:#f4f4f4"></div>
<div class="hd" style="left:93px;top:315px;width:86px;line-height:22px">姓名</div>
<div class="fb" style="left:161px;top:324px;"></div>
<div class="hd" style="left:179px;top:315px;width:72px;line-height:22px">性别</div>
<div class="fb" style="left:233px;top:324px;"></div>
<div class="hd" style="left:251px;top:315px;width:81px;line-height:22px">年龄</div>
<div class="fb" style="left:314px;top:324px;"></div>
<div class="hd" style="left:332px;top:315px;width:146px;line-height:22px">省市</div>
<div class="fb" style="left:460px;top:324px;"></div>
<div class="hd" style="left:478px;top:315px;width:95px;line-height:22px">岗位</div>
<div class="fb" style="left:555px;top:324px;"></div>
<div class="hd" style="left:573px;top:315px;width:88px;line-height:22px">工号</div>
<div class="fb" style="left:643px;top:324px;"></div>
<div class="hd" style="left:661px;top:315px;width:88px;line-height:22px">考核成绩</div>
<div class="fb" style="left:731px;top:324px;"></div>
<div class="hd" style="left:749px;top:315px;width:70px;line-height:22px">等级</div>
<div class="fb" style="left:801px;top:324px;"></div>
<div class="hd" style="left:819px;top:315px;width:106px;line-height:22px">出勤天数</div>
<div class="fb" style="left:907px;top:324px;"></div>
<div class="hd" style="left:925px;top:315px;width:70px;line-height:22px">奖金</div>
<div class="fb" style="left:977px;top:324px;"></div>
<div class="hd" style="left:995px;top:315px;width:94px;line-height:22px">月薪</div>
<div class="fb" style="left:1071px;top:324px;"></div>
<div class="a" style="left:26px;top:342px;width:1061px;height:34px;background:#a9afc0"></div>
<div class="a" style="left:26px;top:342px;width:1061px;height:1px;background:#6f8dc0"></div>
<div class="cell" style="left:24px;top:342px;width:68px;height:34px;line-height:38px;">A01</div>
<div class="cell" style="left:92px;top:342px;width:86px;height:34px;line-height:38px;letter-spacing:0.8px;text-indent:0.8px">小张</div>
<div class="cell" style="left:178px;top:342px;width:72px;height:34px;line-height:38px;letter-spacing:0.8px;text-indent:0.8px">女</div>
<div class="cell" style="left:250px;top:342px;width:81px;height:34px;line-height:38px;">26</div>
<div class="cell" style="left:331px;top:342px;width:146px;height:34px;line-height:38px;letter-spacing:0.8px;text-indent:0.8px">湖南省长沙市</div>
<div class="cell" style="left:477px;top:342px;width:95px;height:34px;line-height:38px;letter-spacing:0.8px;text-indent:0.8px">技术员</div>
<div class="cell" style="left:572px;top:342px;width:88px;height:34px;line-height:38px;">7</div>
<div class="cell" style="left:660px;top:342px;width:88px;height:34px;line-height:38px;">57</div>
<div class="cell" style="left:748px;top:342px;width:70px;height:34px;line-height:38px;letter-spacing:0.8px;text-indent:0.8px">不及格</div>
<div class="cell" style="left:818px;top:342px;width:106px;height:34px;line-height:38px;">21</div>
<div class="cell" style="left:924px;top:342px;width:70px;height:34px;line-height:38px;">0</div>
<div class="cell" style="left:994px;top:342px;width:94px;height:34px;line-height:38px;">4100</div>
<div class="a" style="left:26px;top:376px;width:1061px;height:34px;background:#c9c9c9"></div>
<div class="a" style="left:92px;top:376px;width:1px;height:34px;background:#a6a6a6"></div>
<div class="a" style="left:178px;top:376px;width:1px;height:34px;background:#a6a6a6"></div>
<div class="a" style="left:250px;top:376px;width:1px;height:34px;background:#a6a6a6"></div>
<div class="a" style="left:331px;top:376px;width:1px;height:34px;background:#a6a6a6"></div>
<div class="a" style="left:477px;top:376px;width:1px;height:34px;background:#a6a6a6"></div>
<div class="a" style="left:572px;top:376px;width:1px;height:34px;background:#a6a6a6"></div>
<div class="a" style="left:660px;top:376px;width:1px;height:34px;background:#a6a6a6"></div>
<div class="a" style="left:748px;top:376px;width:1px;height:34px;background:#a6a6a6"></div>
<div class="a" style="left:818px;top:376px;width:1px;height:34px;background:#a6a6a6"></div>
<div class="a" style="left:924px;top:376px;width:1px;height:34px;background:#a6a6a6"></div>
<div class="a" style="left:994px;top:376px;width:1px;height:34px;background:#a6a6a6"></div>
<div class="a" style="left:26px;top:376px;width:1061px;height:1px;background:#6f8dc0"></div>
<div class="cell" style="left:24px;top:376px;width:68px;height:34px;line-height:38px;">A02</div>
<div class="cell" style="left:92px;top:376px;width:86px;height:34px;line-height:38px;letter-spacing:0.8px;text-indent:0.8px">小G</div>
<div class="cell" style="left:178px;top:376px;width:72px;height:34px;line-height:38px;letter-spacing:0.8px;text-indent:0.8px">男</div>
<div class="cell" style="left:250px;top:376px;width:81px;height:34px;line-height:38px;">28</div>
<div class="cell" style="left:331px;top:376px;width:146px;height:34px;line-height:38px;letter-spacing:0.8px;text-indent:0.8px">吉林省长春市</div>
<div class="cell" style="left:477px;top:376px;width:95px;height:34px;line-height:38px;letter-spacing:0.8px;text-indent:0.8px">工程师</div>
<div class="cell" style="left:572px;top:376px;width:88px;height:34px;line-height:38px;">8</div>
<div class="cell" style="left:660px;top:376px;width:88px;height:34px;line-height:38px;">91</div>
<div class="cell" style="left:748px;top:376px;width:70px;height:34px;line-height:38px;letter-spacing:0.8px;text-indent:0.8px">优秀</div>
<div class="cell" style="left:818px;top:376px;width:106px;height:34px;line-height:38px;">21</div>
<div class="cell" style="left:924px;top:376px;width:70px;height:34px;line-height:38px;">200</div>
<div class="cell" style="left:994px;top:376px;width:94px;height:34px;line-height:38px;">6200</div>
<div class="a" style="left:26px;top:410px;width:1061px;height:34px;background:#a9afc0"></div>
<div class="a" style="left:26px;top:410px;width:1061px;height:1px;background:#6f8dc0"></div>
<div class="cell" style="left:24px;top:410px;width:68px;height:34px;line-height:38px;">A03</div>
<div class="cell" style="left:92px;top:410px;width:86px;height:34px;line-height:38px;letter-spacing:0.8px;text-indent:0.8px">小F</div>
<div class="cell" style="left:178px;top:410px;width:72px;height:34px;line-height:38px;letter-spacing:0.8px;text-indent:0.8px">女</div>
<div class="cell" style="left:250px;top:410px;width:81px;height:34px;line-height:38px;">28</div>
<div class="cell" style="left:331px;top:410px;width:146px;height:34px;line-height:38px;letter-spacing:0.8px;text-indent:0.8px">辽宁省沈阳市</div>
<div class="cell" style="left:477px;top:410px;width:95px;height:34px;line-height:38px;letter-spacing:0.8px;text-indent:0.8px">工程师</div>
<div class="cell" style="left:572px;top:410px;width:88px;height:34px;line-height:38px;">9</div>
<div class="cell" style="left:660px;top:410px;width:88px;height:34px;line-height:38px;">90</div>
<div class="cell" style="left:748px;top:410px;width:70px;height:34px;line-height:38px;letter-spacing:0.8px;text-indent:0.8px">优秀</div>
<div class="cell" style="left:818px;top:410px;width:106px;height:34px;line-height:38px;">21</div>
<div class="cell" style="left:924px;top:410px;width:70px;height:34px;line-height:38px;">200</div>
<div class="cell" style="left:994px;top:410px;width:94px;height:34px;line-height:38px;">6100</div>
<div class="a" style="left:26px;top:444px;width:1061px;height:34px;background:#c9c9c9"></div>
<div class="a" style="left:92px;top:444px;width:1px;height:34px;background:#a6a6a6"></div>
<div class="a" style="left:178px;top:444px;width:1px;height:34px;background:#a6a6a6"></div>
<div class="a" style="left:250px;top:444px;width:1px;height:34px;background:#a6a6a6"></div>
<div class="a" style="left:331px;top:444px;width:1px;height:34px;background:#a6a6a6"></div>
<div class="a" style="left:477px;top:444px;width:1px;height:34px;background:#a6a6a6"></div>
<div class="a" style="left:572px;top:444px;width:1px;height:34px;background:#a6a6a6"></div>
<div class="a" style="left:660px;top:444px;width:1px;height:34px;background:#a6a6a6"></div>
<div class="a" style="left:748px;top:444px;width:1px;height:34px;background:#a6a6a6"></div>
<div class="a" style="left:818px;top:444px;width:1px;height:34px;background:#a6a6a6"></div>
<div class="a" style="left:924px;top:444px;width:1px;height:34px;background:#a6a6a6"></div>
<div class="a" style="left:994px;top:444px;width:1px;height:34px;background:#a6a6a6"></div>
<div class="a" style="left:26px;top:444px;width:1061px;height:1px;background:#6f8dc0"></div>
<div class="cell" style="left:24px;top:444px;width:68px;height:34px;line-height:38px;">A04</div>
<div class="cell" style="left:92px;top:444px;width:86px;height:34px;line-height:38px;letter-spacing:0.8px;text-indent:0.8px">小J</div>
<div class="cell" style="left:178px;top:444px;width:72px;height:34px;line-height:38px;letter-spacing:0.8px;text-indent:0.8px">男</div>
<div class="cell" style="left:250px;top:444px;width:81px;height:34px;line-height:38px;">36</div>
<div class="cell" style="left:331px;top:444px;width:146px;height:34px;line-height:38px;letter-spacing:0.8px;text-indent:0.8px">江苏省南京市</div>
<div class="cell" style="left:477px;top:444px;width:95px;height:34px;line-height:38px;letter-spacing:0.8px;text-indent:0.8px">助工</div>
<div class="cell" style="left:572px;top:444px;width:88px;height:34px;line-height:38px;">10</div>
<div class="cell" style="left:660px;top:444px;width:88px;height:34px;line-height:38px;">78</div>
<div class="cell" style="left:748px;top:444px;width:70px;height:34px;line-height:38px;letter-spacing:0.8px;text-indent:0.8px">及格</div>
<div class="cell" style="left:818px;top:444px;width:106px;height:34px;line-height:38px;">21</div>
<div class="cell" style="left:924px;top:444px;width:70px;height:34px;line-height:38px;">0</div>
<div class="cell" style="left:994px;top:444px;width:94px;height:34px;line-height:38px;">4900</div>
<div class="a" style="left:26px;top:478px;width:1061px;height:22px;background:#a9afc0"></div>
<div class="a" style="left:26px;top:478px;width:1061px;height:1px;background:#6f8dc0"></div>
<div class="cell" style="left:24px;top:478px;width:68px;height:22px;line-height:27px;">A05</div>
<div class="cell" style="left:92px;top:478px;width:86px;height:22px;line-height:27px;letter-spacing:0.8px;text-indent:0.8px">李四</div>
<div class="cell" style="left:178px;top:478px;width:72px;height:22px;line-height:27px;letter-spacing:0.8px;text-indent:0.8px">男</div>
<div class="cell" style="left:250px;top:478px;width:81px;height:22px;line-height:27px;">23</div>
<div class="cell" style="left:331px;top:478px;width:146px;height:22px;line-height:27px;letter-spacing:0.8px;text-indent:0.8px">四川省成都市</div>
<div class="cell" style="left:477px;top:478px;width:95px;height:22px;line-height:27px;letter-spacing:0.8px;text-indent:0.8px">工人</div>
<div class="cell" style="left:572px;top:478px;width:88px;height:22px;line-height:27px;">11</div>
<div class="cell" style="left:660px;top:478px;width:88px;height:22px;line-height:27px;">66</div>
<div class="cell" style="left:748px;top:478px;width:70px;height:22px;line-height:27px;letter-spacing:0.8px;text-indent:0.8px">及格</div>
<div class="cell" style="left:818px;top:478px;width:106px;height:22px;line-height:27px;">23</div>
<div class="cell" style="left:924px;top:478px;width:70px;height:22px;line-height:27px;">200</div>
<div class="cell" style="left:994px;top:478px;width:94px;height:22px;line-height:27px;">4600</div>
<div class="a" style="left:26px;top:500px;width:1061px;height:22px;background:#c9c9c9"></div>
<div class="a" style="left:92px;top:500px;width:1px;height:22px;background:#a6a6a6"></div>
<div class="a" style="left:178px;top:500px;width:1px;height:22px;background:#a6a6a6"></div>
<div class="a" style="left:250px;top:500px;width:1px;height:22px;background:#a6a6a6"></div>
<div class="a" style="left:331px;top:500px;width:1px;height:22px;background:#a6a6a6"></div>
<div class="a" style="left:477px;top:500px;width:1px;height:22px;background:#a6a6a6"></div>
<div class="a" style="left:572px;top:500px;width:1px;height:22px;background:#a6a6a6"></div>
<div class="a" style="left:660px;top:500px;width:1px;height:22px;background:#a6a6a6"></div>
<div class="a" style="left:748px;top:500px;width:1px;height:22px;background:#a6a6a6"></div>
<div class="a" style="left:818px;top:500px;width:1px;height:22px;background:#a6a6a6"></div>
<div class="a" style="left:924px;top:500px;width:1px;height:22px;background:#a6a6a6"></div>
<div class="a" style="left:994px;top:500px;width:1px;height:22px;background:#a6a6a6"></div>
<div class="a" style="left:26px;top:500px;width:1061px;height:1px;background:#6f8dc0"></div>
<div class="cell" style="left:24px;top:500px;width:68px;height:22px;line-height:27px;">A06</div>
<div class="cell" style="left:92px;top:500px;width:86px;height:22px;line-height:27px;letter-spacing:0.8px;text-indent:0.8px">小A</div>
<div class="cell" style="left:178px;top:500px;width:72px;height:22px;line-height:27px;letter-spacing:0.8px;text-indent:0.8px">女</div>
<div class="cell" style="left:250px;top:500px;width:81px;height:22px;line-height:27px;">23</div>
<div class="cell" style="left:331px;top:500px;width:146px;height:22px;line-height:27px;letter-spacing:0.8px;text-indent:0.8px">湖北省武汉市</div>
<div class="cell" style="left:477px;top:500px;width:95px;height:22px;line-height:27px;letter-spacing:0.8px;text-indent:0.8px">工人</div>
<div class="cell" style="left:572px;top:500px;width:88px;height:22px;line-height:27px;">12</div>
<div class="cell" style="left:660px;top:500px;width:88px;height:22px;line-height:27px;">58</div>
<div class="cell" style="left:748px;top:500px;width:70px;height:22px;line-height:27px;letter-spacing:0.8px;text-indent:0.8px">不及格</div>
<div class="cell" style="left:818px;top:500px;width:106px;height:22px;line-height:27px;">21</div>
<div class="cell" style="left:924px;top:500px;width:70px;height:22px;line-height:27px;">0</div>
<div class="cell" style="left:994px;top:500px;width:94px;height:22px;line-height:27px;">4100</div>
<div class="a" style="left:26px;top:522px;width:1061px;height:22px;background:#a9afc0"></div>
<div class="a" style="left:26px;top:522px;width:1061px;height:1px;background:#6f8dc0"></div>
<div class="cell" style="left:24px;top:522px;width:68px;height:22px;line-height:27px;">A07</div>
<div class="cell" style="left:92px;top:522px;width:86px;height:22px;line-height:27px;letter-spacing:0.8px;text-indent:0.8px">小N</div>
<div class="cell" style="left:178px;top:522px;width:72px;height:22px;line-height:27px;letter-spacing:0.8px;text-indent:0.8px">女</div>
<div class="cell" style="left:250px;top:522px;width:81px;height:22px;line-height:27px;">24</div>
<div class="cell" style="left:331px;top:522px;width:146px;height:22px;line-height:27px;letter-spacing:0.8px;text-indent:0.8px">吉林省长春市</div>
<div class="cell" style="left:477px;top:522px;width:95px;height:22px;line-height:27px;letter-spacing:0.8px;text-indent:0.8px">工人</div>
<div class="cell" style="left:572px;top:522px;width:88px;height:22px;line-height:27px;">13</div>
<div class="cell" style="left:660px;top:522px;width:88px;height:22px;line-height:27px;">65</div>
<div class="cell" style="left:748px;top:522px;width:70px;height:22px;line-height:27px;letter-spacing:0.8px;text-indent:0.8px">及格</div>
<div class="cell" style="left:818px;top:522px;width:106px;height:22px;line-height:27px;">21</div>
<div class="cell" style="left:924px;top:522px;width:70px;height:22px;line-height:27px;">0</div>
<div class="cell" style="left:994px;top:522px;width:94px;height:22px;line-height:27px;">4300</div>
<div class="a" style="left:26px;top:544px;width:1061px;height:22px;background:#c9c9c9"></div>
<div class="a" style="left:92px;top:544px;width:1px;height:22px;background:#a6a6a6"></div>
<div class="a" style="left:178px;top:544px;width:1px;height:22px;background:#a6a6a6"></div>
<div class="a" style="left:250px;top:544px;width:1px;height:22px;background:#a6a6a6"></div>
<div class="a" style="left:331px;top:544px;width:1px;height:22px;background:#a6a6a6"></div>
<div class="a" style="left:477px;top:544px;width:1px;height:22px;background:#a6a6a6"></div>
<div class="a" style="left:572px;top:544px;width:1px;height:22px;background:#a6a6a6"></div>
<div class="a" style="left:660px;top:544px;width:1px;height:22px;background:#a6a6a6"></div>
<div class="a" style="left:748px;top:544px;width:1px;height:22px;background:#a6a6a6"></div>
<div class="a" style="left:818px;top:544px;width:1px;height:22px;background:#a6a6a6"></div>
<div class="a" style="left:924px;top:544px;width:1px;height:22px;background:#a6a6a6"></div>
<div class="a" style="left:994px;top:544px;width:1px;height:22px;background:#a6a6a6"></div>
<div class="a" style="left:26px;top:544px;width:1061px;height:1px;background:#6f8dc0"></div>
<div class="cell" style="left:24px;top:544px;width:68px;height:22px;line-height:27px;">A08</div>
<div class="cell" style="left:92px;top:544px;width:86px;height:22px;line-height:27px;letter-spacing:0.8px;text-indent:0.8px">王五</div>
<div class="cell" style="left:178px;top:544px;width:72px;height:22px;line-height:27px;letter-spacing:0.8px;text-indent:0.8px">女</div>
<div class="cell" style="left:250px;top:544px;width:81px;height:22px;line-height:27px;">25</div>
<div class="cell" style="left:331px;top:544px;width:146px;height:22px;line-height:27px;letter-spacing:0.8px;text-indent:0.8px">四川省成都市</div>
<div class="cell" style="left:477px;top:544px;width:95px;height:22px;line-height:27px;letter-spacing:0.8px;text-indent:0.8px">技术员</div>
<div class="cell" style="left:572px;top:544px;width:88px;height:22px;line-height:27px;">14</div>
<div class="cell" style="left:660px;top:544px;width:88px;height:22px;line-height:27px;">64</div>
<div class="cell" style="left:748px;top:544px;width:70px;height:22px;line-height:27px;letter-spacing:0.8px;text-indent:0.8px">及格</div>
<div class="cell" style="left:818px;top:544px;width:106px;height:22px;line-height:27px;">23</div>
<div class="cell" style="left:924px;top:544px;width:70px;height:22px;line-height:27px;">200</div>
<div class="cell" style="left:994px;top:544px;width:94px;height:22px;line-height:27px;">5300</div>
<div class="a" style="left:26px;top:566px;width:1061px;height:22px;background:#a9afc0"></div>
<div class="a" style="left:26px;top:566px;width:1061px;height:1px;background:#6f8dc0"></div>
<div class="cell" style="left:24px;top:566px;width:68px;height:22px;line-height:27px;">A09</div>
<div class="cell" style="left:92px;top:566px;width:86px;height:22px;line-height:27px;letter-spacing:0.8px;text-indent:0.8px">小韦</div>
<div class="cell" style="left:178px;top:566px;width:72px;height:22px;line-height:27px;letter-spacing:0.8px;text-indent:0.8px">男</div>
<div class="cell" style="left:250px;top:566px;width:81px;height:22px;line-height:27px;">36</div>
<div class="cell" style="left:331px;top:566px;width:146px;height:22px;line-height:27px;letter-spacing:0.8px;text-indent:0.8px">吉林省长春市</div>
<div class="cell" style="left:477px;top:566px;width:95px;height:22px;line-height:27px;letter-spacing:0.8px;text-indent:0.8px">工人</div>
<div class="cell" style="left:572px;top:566px;width:88px;height:22px;line-height:27px;">15</div>
<div class="cell" style="left:660px;top:566px;width:88px;height:22px;line-height:27px;">80</div>
<div class="cell" style="left:748px;top:566px;width:70px;height:22px;line-height:27px;letter-spacing:0.8px;text-indent:0.8px">良好</div>
<div class="cell" style="left:818px;top:566px;width:106px;height:22px;line-height:27px;">23</div>
<div class="cell" style="left:924px;top:566px;width:70px;height:22px;line-height:27px;">200</div>
<div class="cell" style="left:994px;top:566px;width:94px;height:22px;line-height:27px;">5000</div>
<div class="a" style="left:26px;top:588px;width:1061px;height:22px;background:#c9c9c9"></div>
<div class="a" style="left:92px;top:588px;width:1px;height:22px;background:#a6a6a6"></div>
<div class="a" style="left:178px;top:588px;width:1px;height:22px;background:#a6a6a6"></div>
<div class="a" style="left:250px;top:588px;width:1px;height:22px;background:#a6a6a6"></div>
<div class="a" style="left:331px;top:588px;width:1px;height:22px;background:#a6a6a6"></div>
<div class="a" style="left:477px;top:588px;width:1px;height:22px;background:#a6a6a6"></div>
<div class="a" style="left:572px;top:588px;width:1px;height:22px;background:#a6a6a6"></div>
<div class="a" style="left:660px;top:588px;width:1px;height:22px;background:#a6a6a6"></div>
<div class="a" style="left:748px;top:588px;width:1px;height:22px;background:#a6a6a6"></div>
<div class="a" style="left:818px;top:588px;width:1px;height:22px;background:#a6a6a6"></div>
<div class="a" style="left:924px;top:588px;width:1px;height:22px;background:#a6a6a6"></div>
<div class="a" style="left:994px;top:588px;width:1px;height:22px;background:#a6a6a6"></div>
<div class="a" style="left:26px;top:588px;width:1061px;height:1px;background:#6f8dc0"></div>
<div class="cell" style="left:24px;top:588px;width:68px;height:22px;line-height:27px;">A10</div>
<div class="cell" style="left:92px;top:588px;width:86px;height:22px;line-height:27px;letter-spacing:0.8px;text-indent:0.8px">小E</div>
<div class="cell" style="left:178px;top:588px;width:72px;height:22px;line-height:27px;letter-spacing:0.8px;text-indent:0.8px">男</div>
<div class="cell" style="left:250px;top:588px;width:81px;height:22px;line-height:27px;">36</div>
<div class="cell" style="left:331px;top:588px;width:146px;height:22px;line-height:27px;letter-spacing:0.8px;text-indent:0.8px">吉林省长春市</div>
<div class="cell" style="left:477px;top:588px;width:95px;height:22px;line-height:27px;letter-spacing:0.8px;text-indent:0.8px">工人</div>
<div class="cell" style="left:572px;top:588px;width:88px;height:22px;line-height:27px;">16</div>
<div class="cell" style="left:660px;top:588px;width:88px;height:22px;line-height:27px;">79</div>
<div class="cell" style="left:748px;top:588px;width:70px;height:22px;line-height:27px;letter-spacing:0.8px;text-indent:0.8px">及格</div>
<div class="cell" style="left:818px;top:588px;width:106px;height:22px;line-height:27px;">23</div>
<div class="cell" style="left:924px;top:588px;width:70px;height:22px;line-height:27px;">200</div>
<div class="cell" style="left:994px;top:588px;width:94px;height:22px;line-height:27px;">4600</div>
<div class="a" style="left:26px;top:610px;width:1061px;height:22px;background:#a9afc0"></div>
<div class="a" style="left:26px;top:610px;width:1061px;height:1px;background:#6f8dc0"></div>
<div class="cell" style="left:24px;top:610px;width:68px;height:22px;line-height:27px;">A11</div>
<div class="cell" style="left:92px;top:610px;width:86px;height:22px;line-height:27px;letter-spacing:0.8px;text-indent:0.8px">小D</div>
<div class="cell" style="left:178px;top:610px;width:72px;height:22px;line-height:27px;letter-spacing:0.8px;text-indent:0.8px">女</div>
<div class="cell" style="left:250px;top:610px;width:81px;height:22px;line-height:27px;">28</div>
<div class="cell" style="left:331px;top:610px;width:146px;height:22px;line-height:27px;letter-spacing:0.8px;text-indent:0.8px">四川省成都市</div>
<div class="cell" style="left:477px;top:610px;width:95px;height:22px;line-height:27px;letter-spacing:0.8px;text-indent:0.8px">技术员</div>
<div class="cell" style="left:572px;top:610px;width:88px;height:22px;line-height:27px;">17</div>
<div class="cell" style="left:660px;top:610px;width:88px;height:22px;line-height:27px;">80</div>
<div class="cell" style="left:748px;top:610px;width:70px;height:22px;line-height:27px;letter-spacing:0.8px;text-indent:0.8px">良好</div>
<div class="cell" style="left:818px;top:610px;width:106px;height:22px;line-height:27px;">23</div>
<div class="cell" style="left:924px;top:610px;width:70px;height:22px;line-height:27px;">200</div>
<div class="cell" style="left:994px;top:610px;width:94px;height:22px;line-height:27px;">5100</div>
<div class="a" style="left:26px;top:632px;width:1061px;height:22px;background:#c9c9c9"></div>
<div class="a" style="left:92px;top:632px;width:1px;height:22px;background:#a6a6a6"></div>
<div class="a" style="left:178px;top:632px;width:1px;height:22px;background:#a6a6a6"></div>
<div class="a" style="left:250px;top:632px;width:1px;height:22px;background:#a6a6a6"></div>
<div class="a" style="left:331px;top:632px;width:1px;height:22px;background:#a6a6a6"></div>
<div class="a" style="left:477px;top:632px;width:1px;height:22px;background:#a6a6a6"></div>
<div class="a" style="left:572px;top:632px;width:1px;height:22px;background:#a6a6a6"></div>
<div class="a" style="left:660px;top:632px;width:1px;height:22px;background:#a6a6a6"></div>
<div class="a" style="left:748px;top:632px;width:1px;height:22px;background:#a6a6a6"></div>
<div class="a" style="left:818px;top:632px;width:1px;height:22px;background:#a6a6a6"></div>
<div class="a" style="left:924px;top:632px;width:1px;height:22px;background:#a6a6a6"></div>
<div class="a" style="left:994px;top:632px;width:1px;height:22px;background:#a6a6a6"></div>
<div class="a" style="left:26px;top:632px;width:1061px;height:1px;background:#6f8dc0"></div>
<div class="cell" style="left:24px;top:632px;width:68px;height:22px;line-height:27px;">A12</div>
<div class="cell" style="left:92px;top:632px;width:86px;height:22px;line-height:27px;letter-spacing:0.8px;text-indent:0.8px">小明</div>
<div class="cell" style="left:178px;top:632px;width:72px;height:22px;line-height:27px;letter-spacing:0.8px;text-indent:0.8px">男</div>
<div class="cell" style="left:250px;top:632px;width:81px;height:22px;line-height:27px;">33</div>
<div class="cell" style="left:331px;top:632px;width:146px;height:22px;line-height:27px;letter-spacing:0.8px;text-indent:0.8px">湖北省武汉市</div>
<div class="cell" style="left:477px;top:632px;width:95px;height:22px;line-height:27px;letter-spacing:0.8px;text-indent:0.8px">技术员</div>
<div class="cell" style="left:572px;top:632px;width:88px;height:22px;line-height:27px;">18</div>
<div class="cell" style="left:660px;top:632px;width:88px;height:22px;line-height:27px;">87</div>
<div class="cell" style="left:748px;top:632px;width:70px;height:22px;line-height:27px;letter-spacing:0.8px;text-indent:0.8px">良好</div>
<div class="cell" style="left:818px;top:632px;width:106px;height:22px;line-height:27px;">23</div>
<div class="cell" style="left:924px;top:632px;width:70px;height:22px;line-height:27px;">200</div>
<div class="cell" style="left:994px;top:632px;width:94px;height:22px;line-height:27px;">5300</div>
<div class="a" style="left:26px;top:654px;width:1061px;height:22px;background:#a9afc0"></div>
<div class="a" style="left:26px;top:654px;width:1061px;height:1px;background:#6f8dc0"></div>
<div class="cell" style="left:24px;top:654px;width:68px;height:22px;line-height:27px;">A13</div>
<div class="cell" style="left:92px;top:654px;width:86px;height:22px;line-height:27px;letter-spacing:0.8px;text-indent:0.8px">小C</div>
<div class="cell" style="left:178px;top:654px;width:72px;height:22px;line-height:27px;letter-spacing:0.8px;text-indent:0.8px">女</div>
<div class="cell" style="left:250px;top:654px;width:81px;height:22px;line-height:27px;">33</div>
<div class="cell" style="left:331px;top:654px;width:146px;height:22px;line-height:27px;letter-spacing:0.8px;text-indent:0.8px">湖南省长沙市</div>
<div class="cell" style="left:477px;top:654px;width:95px;height:22px;line-height:27px;letter-spacing:0.8px;text-indent:0.8px">工人</div>
<div class="cell" style="left:572px;top:654px;width:88px;height:22px;line-height:27px;">19</div>
<div class="cell" style="left:660px;top:654px;width:88px;height:22px;line-height:27px;">87</div>
<div class="cell" style="left:748px;top:654px;width:70px;height:22px;line-height:27px;letter-spacing:0.8px;text-indent:0.8px">良好</div>
<div class="cell" style="left:818px;top:654px;width:106px;height:22px;line-height:27px;">23</div>
<div class="cell" style="left:924px;top:654px;width:70px;height:22px;line-height:27px;">200</div>
<div class="cell" style="left:994px;top:654px;width:94px;height:22px;line-height:27px;">5000</div>
<div class="a" style="left:26px;top:676px;width:1061px;height:22px;background:#c9c9c9"></div>
<div class="a" style="left:92px;top:676px;width:1px;height:22px;background:#a6a6a6"></div>
<div class="a" style="left:178px;top:676px;width:1px;height:22px;background:#a6a6a6"></div>
<div class="a" style="left:250px;top:676px;width:1px;height:22px;background:#a6a6a6"></div>
<div class="a" style="left:331px;top:676px;width:1px;height:22px;background:#a6a6a6"></div>
<div class="a" style="left:477px;top:676px;width:1px;height:22px;background:#a6a6a6"></div>
<div class="a" style="left:572px;top:676px;width:1px;height:22px;background:#a6a6a6"></div>
<div class="a" style="left:660px;top:676px;width:1px;height:22px;background:#a6a6a6"></div>
<div class="a" style="left:748px;top:676px;width:1px;height:22px;background:#a6a6a6"></div>
<div class="a" style="left:818px;top:676px;width:1px;height:22px;background:#a6a6a6"></div>
<div class="a" style="left:924px;top:676px;width:1px;height:22px;background:#a6a6a6"></div>
<div class="a" style="left:994px;top:676px;width:1px;height:22px;background:#a6a6a6"></div>
<div class="a" style="left:26px;top:676px;width:1061px;height:1px;background:#6f8dc0"></div>
<div class="cell" style="left:24px;top:676px;width:68px;height:22px;line-height:27px;">A14</div>
<div class="cell" style="left:92px;top:676px;width:86px;height:22px;line-height:27px;letter-spacing:0.8px;text-indent:0.8px">李六</div>
<div class="cell" style="left:178px;top:676px;width:72px;height:22px;line-height:27px;letter-spacing:0.8px;text-indent:0.8px">女</div>
<div class="cell" style="left:250px;top:676px;width:81px;height:22px;line-height:27px;">36</div>
<div class="cell" style="left:331px;top:676px;width:146px;height:22px;line-height:27px;letter-spacing:0.8px;text-indent:0.8px">辽宁省沈阳市</div>
<div class="cell" style="left:477px;top:676px;width:95px;height:22px;line-height:27px;letter-spacing:0.8px;text-indent:0.8px">技术员</div>
<div class="cell" style="left:572px;top:676px;width:88px;height:22px;line-height:27px;">20</div>
<div class="cell" style="left:660px;top:676px;width:88px;height:22px;line-height:27px;">66</div>
<div class="cell" style="left:748px;top:676px;width:70px;height:22px;line-height:27px;letter-spacing:0.8px;text-indent:0.8px">及格</div>
<div class="cell" style="left:818px;top:676px;width:106px;height:22px;line-height:27px;">23</div>
<div class="cell" style="left:924px;top:676px;width:70px;height:22px;line-height:27px;">200</div>
<div class="cell" style="left:994px;top:676px;width:94px;height:22px;line-height:27px;">4300</div>
<div class="a" style="left:26px;top:698px;width:1061px;height:22px;background:#a9afc0"></div>
<div class="a" style="left:26px;top:698px;width:1061px;height:1px;background:#6f8dc0"></div>
<div class="cell" style="left:24px;top:698px;width:68px;height:22px;line-height:27px;">A15</div>
<div class="cell" style="left:92px;top:698px;width:86px;height:22px;line-height:27px;letter-spacing:0.8px;text-indent:0.8px">小B</div>
<div class="cell" style="left:178px;top:698px;width:72px;height:22px;line-height:27px;letter-spacing:0.8px;text-indent:0.8px">男</div>
<div class="cell" style="left:250px;top:698px;width:81px;height:22px;line-height:27px;">25</div>
<div class="cell" style="left:331px;top:698px;width:146px;height:22px;line-height:27px;letter-spacing:0.8px;text-indent:0.8px">江苏省南京市</div>
<div class="cell" style="left:477px;top:698px;width:95px;height:22px;line-height:27px;letter-spacing:0.8px;text-indent:0.8px">技术员</div>
<div class="cell" style="left:572px;top:698px;width:88px;height:22px;line-height:27px;">21</div>
<div class="cell" style="left:660px;top:698px;width:88px;height:22px;line-height:27px;">66</div>
<div class="cell" style="left:748px;top:698px;width:70px;height:22px;line-height:27px;letter-spacing:0.8px;text-indent:0.8px">及格</div>
<div class="cell" style="left:818px;top:698px;width:106px;height:22px;line-height:27px;">24</div>
<div class="cell" style="left:924px;top:698px;width:70px;height:22px;line-height:27px;">200</div>
<div class="cell" style="left:994px;top:698px;width:94px;height:22px;line-height:27px;">4600</div>
<div class="a" style="left:26px;top:720px;width:1061px;height:22px;background:#c9c9c9"></div>
<div class="a" style="left:92px;top:720px;width:1px;height:22px;background:#a6a6a6"></div>
<div class="a" style="left:178px;top:720px;width:1px;height:22px;background:#a6a6a6"></div>
<div class="a" style="left:250px;top:720px;width:1px;height:22px;background:#a6a6a6"></div>
<div class="a" style="left:331px;top:720px;width:1px;height:22px;background:#a6a6a6"></div>
<div class="a" style="left:477px;top:720px;width:1px;height:22px;background:#a6a6a6"></div>
<div class="a" style="left:572px;top:720px;width:1px;height:22px;background:#a6a6a6"></div>
<div class="a" style="left:660px;top:720px;width:1px;height:22px;background:#a6a6a6"></div>
<div class="a" style="left:748px;top:720px;width:1px;height:22px;background:#a6a6a6"></div>
<div class="a" style="left:818px;top:720px;width:1px;height:22px;background:#a6a6a6"></div>
<div class="a" style="left:924px;top:720px;width:1px;height:22px;background:#a6a6a6"></div>
<div class="a" style="left:994px;top:720px;width:1px;height:22px;background:#a6a6a6"></div>
<div class="a" style="left:26px;top:720px;width:1061px;height:1px;background:#6f8dc0"></div>
<div class="cell" style="left:24px;top:720px;width:68px;height:22px;line-height:27px;">A16</div>
<div class="cell" style="left:92px;top:720px;width:86px;height:22px;line-height:27px;letter-spacing:0.8px;text-indent:0.8px">小红</div>
<div class="cell" style="left:178px;top:720px;width:72px;height:22px;line-height:27px;letter-spacing:0.8px;text-indent:0.8px">男</div>
<div class="cell" style="left:250px;top:720px;width:81px;height:22px;line-height:27px;">30</div>
<div class="cell" style="left:331px;top:720px;width:146px;height:22px;line-height:27px;letter-spacing:0.8px;text-indent:0.8px">四川省成都市</div>
<div class="cell" style="left:477px;top:720px;width:95px;height:22px;line-height:27px;letter-spacing:0.8px;text-indent:0.8px">工人</div>
<div class="cell" style="left:572px;top:720px;width:88px;height:22px;line-height:27px;">22</div>
<div class="cell" style="left:660px;top:720px;width:88px;height:22px;line-height:27px;">89</div>
<div class="cell" style="left:748px;top:720px;width:70px;height:22px;line-height:27px;letter-spacing:0.8px;text-indent:0.8px">良好</div>
<div class="cell" style="left:818px;top:720px;width:106px;height:22px;line-height:27px;">24</div>
<div class="cell" style="left:924px;top:720px;width:70px;height:22px;line-height:27px;">200</div>
<div class="cell" style="left:994px;top:720px;width:94px;height:22px;line-height:27px;">5400</div>
<div class="a" style="left:26px;top:742px;width:1061px;height:22px;background:#a9afc0"></div>
<div class="a" style="left:26px;top:742px;width:1061px;height:1px;background:#6f8dc0"></div>
<div class="cell" style="left:24px;top:742px;width:68px;height:22px;line-height:27px;">A17</div>
<div class="cell" style="left:92px;top:742px;width:86px;height:22px;line-height:27px;letter-spacing:0.8px;text-indent:0.8px">小王</div>
<div class="cell" style="left:178px;top:742px;width:72px;height:22px;line-height:27px;letter-spacing:0.8px;text-indent:0.8px">男</div>
<div class="cell" style="left:250px;top:742px;width:81px;height:22px;line-height:27px;">25</div>
<div class="cell" style="left:331px;top:742px;width:146px;height:22px;line-height:27px;letter-spacing:0.8px;text-indent:0.8px">福建省厦门市</div>
<div class="cell" style="left:477px;top:742px;width:95px;height:22px;line-height:27px;letter-spacing:0.8px;text-indent:0.8px">技术员</div>
<div class="cell" style="left:572px;top:742px;width:88px;height:22px;line-height:27px;">23</div>
<div class="cell" style="left:660px;top:742px;width:88px;height:22px;line-height:27px;">66</div>
<div class="cell" style="left:748px;top:742px;width:70px;height:22px;line-height:27px;letter-spacing:0.8px;text-indent:0.8px">及格</div>
<div class="cell" style="left:818px;top:742px;width:106px;height:22px;line-height:27px;">25</div>
<div class="cell" style="left:924px;top:742px;width:70px;height:22px;line-height:27px;">200</div>
<div class="cell" style="left:994px;top:742px;width:94px;height:22px;line-height:27px;">4600</div>
<div class="a" style="left:26px;top:764px;width:1061px;height:22px;background:#c9c9c9"></div>
<div class="a" style="left:92px;top:764px;width:1px;height:22px;background:#a6a6a6"></div>
<div class="a" style="left:178px;top:764px;width:1px;height:22px;background:#a6a6a6"></div>
<div class="a" style="left:250px;top:764px;width:1px;height:22px;background:#a6a6a6"></div>
<div class="a" style="left:331px;top:764px;width:1px;height:22px;background:#a6a6a6"></div>
<div class="a" style="left:477px;top:764px;width:1px;height:22px;background:#a6a6a6"></div>
<div class="a" style="left:572px;top:764px;width:1px;height:22px;background:#a6a6a6"></div>
<div class="a" style="left:660px;top:764px;width:1px;height:22px;background:#a6a6a6"></div>
<div class="a" style="left:748px;top:764px;width:1px;height:22px;background:#a6a6a6"></div>
<div class="a" style="left:818px;top:764px;width:1px;height:22px;background:#a6a6a6"></div>
<div class="a" style="left:924px;top:764px;width:1px;height:22px;background:#a6a6a6"></div>
<div class="a" style="left:994px;top:764px;width:1px;height:22px;background:#a6a6a6"></div>
<div class="a" style="left:26px;top:764px;width:1061px;height:1px;background:#6f8dc0"></div>
<div class="cell" style="left:24px;top:764px;width:68px;height:22px;line-height:27px;">A18</div>
<div class="cell" style="left:92px;top:764px;width:86px;height:22px;line-height:27px;letter-spacing:0.8px;text-indent:0.8px">小H</div>
<div class="cell" style="left:178px;top:764px;width:72px;height:22px;line-height:27px;letter-spacing:0.8px;text-indent:0.8px">女</div>
<div class="cell" style="left:250px;top:764px;width:81px;height:22px;line-height:27px;">30</div>
<div class="cell" style="left:331px;top:764px;width:146px;height:22px;line-height:27px;letter-spacing:0.8px;text-indent:0.8px">江苏省南京市</div>
<div class="cell" style="left:477px;top:764px;width:95px;height:22px;line-height:27px;letter-spacing:0.8px;text-indent:0.8px">技术员</div>
<div class="cell" style="left:572px;top:764px;width:88px;height:22px;line-height:27px;">24</div>
<div class="cell" style="left:660px;top:764px;width:88px;height:22px;line-height:27px;">87</div>
<div class="cell" style="left:748px;top:764px;width:70px;height:22px;line-height:27px;letter-spacing:0.8px;text-indent:0.8px">良好</div>
<div class="cell" style="left:818px;top:764px;width:106px;height:22px;line-height:27px;">21</div>
<div class="cell" style="left:924px;top:764px;width:70px;height:22px;line-height:27px;">200</div>
<div class="cell" style="left:994px;top:764px;width:94px;height:22px;line-height:27px;">5900</div>
<div class="a" style="left:26px;top:786px;width:1061px;height:22px;background:#a9afc0"></div>
<div class="a" style="left:26px;top:786px;width:1061px;height:1px;background:#6f8dc0"></div>
<div class="cell" style="left:24px;top:786px;width:68px;height:22px;line-height:27px;">A19</div>
<div class="cell" style="left:92px;top:786px;width:86px;height:22px;line-height:27px;letter-spacing:0.8px;text-indent:0.8px">小李</div>
<div class="cell" style="left:178px;top:786px;width:72px;height:22px;line-height:27px;letter-spacing:0.8px;text-indent:0.8px">女</div>
<div class="cell" style="left:250px;top:786px;width:81px;height:22px;line-height:27px;">26</div>
<div class="cell" style="left:331px;top:786px;width:146px;height:22px;line-height:27px;letter-spacing:0.8px;text-indent:0.8px">山东省青岛市</div>
<div class="cell" style="left:477px;top:786px;width:95px;height:22px;line-height:27px;letter-spacing:0.8px;text-indent:0.8px">助工</div>
<div class="cell" style="left:572px;top:786px;width:88px;height:22px;line-height:27px;">25</div>
<div class="cell" style="left:660px;top:786px;width:88px;height:22px;line-height:27px;">77</div>
<div class="cell" style="left:748px;top:786px;width:70px;height:22px;line-height:27px;letter-spacing:0.8px;text-indent:0.8px">及格</div>
<div class="cell" style="left:818px;top:786px;width:106px;height:22px;line-height:27px;">26</div>
<div class="cell" style="left:924px;top:786px;width:70px;height:22px;line-height:27px;">200</div>
<div class="cell" style="left:994px;top:786px;width:94px;height:22px;line-height:27px;">4900</div>
<div class="a" style="left:26px;top:808px;width:1061px;height:22px;background:#c9c9c9"></div>
<div class="a" style="left:92px;top:808px;width:1px;height:22px;background:#a6a6a6"></div>
<div class="a" style="left:178px;top:808px;width:1px;height:22px;background:#a6a6a6"></div>
<div class="a" style="left:250px;top:808px;width:1px;height:22px;background:#a6a6a6"></div>
<div class="a" style="left:331px;top:808px;width:1px;height:22px;background:#a6a6a6"></div>
<div class="a" style="left:477px;top:808px;width:1px;height:22px;background:#a6a6a6"></div>
<div class="a" style="left:572px;top:808px;width:1px;height:22px;background:#a6a6a6"></div>
<div class="a" style="left:660px;top:808px;width:1px;height:22px;background:#a6a6a6"></div>
<div class="a" style="left:748px;top:808px;width:1px;height:22px;background:#a6a6a6"></div>
<div class="a" style="left:818px;top:808px;width:1px;height:22px;background:#a6a6a6"></div>
<div class="a" style="left:924px;top:808px;width:1px;height:22px;background:#a6a6a6"></div>
<div class="a" style="left:994px;top:808px;width:1px;height:22px;background:#a6a6a6"></div>
<div class="a" style="left:26px;top:808px;width:1061px;height:1px;background:#6f8dc0"></div>
<div class="cell" style="left:24px;top:808px;width:68px;height:22px;line-height:27px;">A20</div>
<div class="cell" style="left:92px;top:808px;width:86px;height:22px;line-height:27px;letter-spacing:0.8px;text-indent:0.8px">小I</div>
<div class="cell" style="left:178px;top:808px;width:72px;height:22px;line-height:27px;letter-spacing:0.8px;text-indent:0.8px">女</div>
<div class="cell" style="left:250px;top:808px;width:81px;height:22px;line-height:27px;">33</div>
<div class="cell" style="left:331px;top:808px;width:146px;height:22px;line-height:27px;letter-spacing:0.8px;text-indent:0.8px">山东省青岛市</div>
<div class="cell" style="left:477px;top:808px;width:95px;height:22px;line-height:27px;letter-spacing:0.8px;text-indent:0.8px">技术员</div>
<div class="cell" style="left:572px;top:808px;width:88px;height:22px;line-height:27px;">26</div>
<div class="cell" style="left:660px;top:808px;width:88px;height:22px;line-height:27px;">89</div>
<div class="cell" style="left:748px;top:808px;width:70px;height:22px;line-height:27px;letter-spacing:0.8px;text-indent:0.8px">良好</div>
<div class="cell" style="left:818px;top:808px;width:106px;height:22px;line-height:27px;">26</div>
<div class="cell" style="left:924px;top:808px;width:70px;height:22px;line-height:27px;">200</div>
<div class="cell" style="left:994px;top:808px;width:94px;height:22px;line-height:27px;">6000</div>
<div class="a" style="left:26px;top:830px;width:1061px;height:22px;background:#a9afc0"></div>
<div class="a" style="left:26px;top:830px;width:1061px;height:1px;background:#6f8dc0"></div>
<div class="cell" style="left:24px;top:830px;width:68px;height:22px;line-height:27px;">A21</div>
<div class="cell" style="left:92px;top:830px;width:86px;height:22px;line-height:27px;letter-spacing:0.8px;text-indent:0.8px">小L</div>
<div class="cell" style="left:178px;top:830px;width:72px;height:22px;line-height:27px;letter-spacing:0.8px;text-indent:0.8px">男</div>
<div class="cell" style="left:250px;top:830px;width:81px;height:22px;line-height:27px;">30</div>
<div class="cell" style="left:331px;top:830px;width:146px;height:22px;line-height:27px;letter-spacing:0.8px;text-indent:0.8px">福建省厦门市</div>
<div class="cell" style="left:477px;top:830px;width:95px;height:22px;line-height:27px;letter-spacing:0.8px;text-indent:0.8px">工程师</div>
<div class="cell" style="left:572px;top:830px;width:88px;height:22px;line-height:27px;">27</div>
<div class="cell" style="left:660px;top:830px;width:88px;height:22px;line-height:27px;">95</div>
<div class="cell" style="left:748px;top:830px;width:70px;height:22px;line-height:27px;letter-spacing:0.8px;text-indent:0.8px">优秀</div>
<div class="cell" style="left:818px;top:830px;width:106px;height:22px;line-height:27px;">28</div>
<div class="cell" style="left:924px;top:830px;width:70px;height:22px;line-height:27px;">200</div>
<div class="cell" style="left:994px;top:830px;width:94px;height:22px;line-height:27px;">10100</div>
<div class="a" style="left:26px;top:852px;width:1061px;height:22px;background:#c9c9c9"></div>
<div class="a" style="left:92px;top:852px;width:1px;height:22px;background:#a6a6a6"></div>
<div class="a" style="left:178px;top:852px;width:1px;height:22px;background:#a6a6a6"></div>
<div class="a" style="left:250px;top:852px;width:1px;height:22px;background:#a6a6a6"></div>
<div class="a" style="left:331px;top:852px;width:1px;height:22px;background:#a6a6a6"></div>
<div class="a" style="left:477px;top:852px;width:1px;height:22px;background:#a6a6a6"></div>
<div class="a" style="left:572px;top:852px;width:1px;height:22px;background:#a6a6a6"></div>
<div class="a" style="left:660px;top:852px;width:1px;height:22px;background:#a6a6a6"></div>
<div class="a" style="left:748px;top:852px;width:1px;height:22px;background:#a6a6a6"></div>
<div class="a" style="left:818px;top:852px;width:1px;height:22px;background:#a6a6a6"></div>
<div class="a" style="left:924px;top:852px;width:1px;height:22px;background:#a6a6a6"></div>
<div class="a" style="left:994px;top:852px;width:1px;height:22px;background:#a6a6a6"></div>
<div class="a" style="left:26px;top:852px;width:1061px;height:1px;background:#6f8dc0"></div>
<div class="cell" style="left:24px;top:852px;width:68px;height:22px;line-height:27px;">A22</div>
<div class="cell" style="left:92px;top:852px;width:86px;height:22px;line-height:27px;letter-spacing:0.8px;text-indent:0.8px">小K</div>
<div class="cell" style="left:178px;top:852px;width:72px;height:22px;line-height:27px;letter-spacing:0.8px;text-indent:0.8px">男</div>
<div class="cell" style="left:250px;top:852px;width:81px;height:22px;line-height:27px;">26</div>
<div class="cell" style="left:331px;top:852px;width:146px;height:22px;line-height:27px;letter-spacing:0.8px;text-indent:0.8px">湖北省武汉市</div>
<div class="cell" style="left:477px;top:852px;width:95px;height:22px;line-height:27px;letter-spacing:0.8px;text-indent:0.8px">技术员</div>
<div class="cell" style="left:572px;top:852px;width:88px;height:22px;line-height:27px;">1</div>
<div class="cell" style="left:660px;top:852px;width:88px;height:22px;line-height:27px;">66</div>
<div class="cell" style="left:748px;top:852px;width:70px;height:22px;line-height:27px;letter-spacing:0.8px;text-indent:0.8px">及格</div>
<div class="cell" style="left:818px;top:852px;width:106px;height:22px;line-height:27px;">20</div>
<div class="cell" style="left:924px;top:852px;width:70px;height:22px;line-height:27px;">0</div>
<div class="cell" style="left:994px;top:852px;width:94px;height:22px;line-height:27px;">4600</div>
<div class="a" style="left:26px;top:874px;width:1061px;height:22px;background:#a9afc0"></div>
<div class="a" style="left:26px;top:874px;width:1061px;height:1px;background:#6f8dc0"></div>
<div class="cell" style="left:24px;top:874px;width:68px;height:22px;line-height:27px;">A23</div>
<div class="cell" style="left:92px;top:874px;width:86px;height:22px;line-height:27px;letter-spacing:0.8px;text-indent:0.8px">赵七</div>
<div class="cell" style="left:178px;top:874px;width:72px;height:22px;line-height:27px;letter-spacing:0.8px;text-indent:0.8px">男</div>
<div class="cell" style="left:250px;top:874px;width:81px;height:22px;line-height:27px;">23</div>
<div class="cell" style="left:331px;top:874px;width:146px;height:22px;line-height:27px;letter-spacing:0.8px;text-indent:0.8px">贵州省贵阳市</div>
<div class="cell" style="left:477px;top:874px;width:95px;height:22px;line-height:27px;letter-spacing:0.8px;text-indent:0.8px">工人</div>
<div class="cell" style="left:572px;top:874px;width:88px;height:22px;line-height:27px;">2</div>
<div class="cell" style="left:660px;top:874px;width:88px;height:22px;line-height:27px;">64</div>
<div class="cell" style="left:748px;top:874px;width:70px;height:22px;line-height:27px;letter-spacing:0.8px;text-indent:0.8px">及格</div>
<div class="cell" style="left:818px;top:874px;width:106px;height:22px;line-height:27px;">21</div>
<div class="cell" style="left:924px;top:874px;width:70px;height:22px;line-height:27px;">0</div>
<div class="cell" style="left:994px;top:874px;width:94px;height:22px;line-height:27px;">4300</div>
<div class="a" style="left:26px;top:896px;width:1061px;height:22px;background:#c9c9c9"></div>
<div class="a" style="left:92px;top:896px;width:1px;height:22px;background:#a6a6a6"></div>
<div class="a" style="left:178px;top:896px;width:1px;height:22px;background:#a6a6a6"></div>
<div class="a" style="left:250px;top:896px;width:1px;height:22px;background:#a6a6a6"></div>
<div class="a" style="left:331px;top:896px;width:1px;height:22px;background:#a6a6a6"></div>
<div class="a" style="left:477px;top:896px;width:1px;height:22px;background:#a6a6a6"></div>
<div class="a" style="left:572px;top:896px;width:1px;height:22px;background:#a6a6a6"></div>
<div class="a" style="left:660px;top:896px;width:1px;height:22px;background:#a6a6a6"></div>
<div class="a" style="left:748px;top:896px;width:1px;height:22px;background:#a6a6a6"></div>
<div class="a" style="left:818px;top:896px;width:1px;height:22px;background:#a6a6a6"></div>
<div class="a" style="left:924px;top:896px;width:1px;height:22px;background:#a6a6a6"></div>
<div class="a" style="left:994px;top:896px;width:1px;height:22px;background:#a6a6a6"></div>
<div class="a" style="left:26px;top:896px;width:1061px;height:1px;background:#6f8dc0"></div>
<div class="cell" style="left:24px;top:896px;width:68px;height:22px;line-height:27px;">A24</div>
<div class="cell" style="left:92px;top:896px;width:86px;height:22px;line-height:27px;letter-spacing:0.8px;text-indent:0.8px">赵六</div>
<div class="cell" style="left:178px;top:896px;width:72px;height:22px;line-height:27px;letter-spacing:0.8px;text-indent:0.8px">女</div>
<div class="cell" style="left:250px;top:896px;width:81px;height:22px;line-height:27px;">23</div>
<div class="cell" style="left:331px;top:896px;width:146px;height:22px;line-height:27px;letter-spacing:0.8px;text-indent:0.8px">湖南省长沙市</div>
<div class="cell" style="left:477px;top:896px;width:95px;height:22px;line-height:27px;letter-spacing:0.8px;text-indent:0.8px">工人</div>
<div class="cell" style="left:572px;top:896px;width:88px;height:22px;line-height:27px;">3</div>
<div class="cell" style="left:660px;top:896px;width:88px;height:22px;line-height:27px;">66</div>
<div class="cell" style="left:748px;top:896px;width:70px;height:22px;line-height:27px;letter-spacing:0.8px;text-indent:0.8px">及格</div>
<div class="cell" style="left:818px;top:896px;width:106px;height:22px;line-height:27px;">21</div>
<div class="cell" style="left:924px;top:896px;width:70px;height:22px;line-height:27px;">0</div>
<div class="cell" style="left:994px;top:896px;width:94px;height:22px;line-height:27px;">4900</div>
<div class="a" style="left:26px;top:918px;width:1061px;height:22px;background:#a9afc0"></div>
<div class="a" style="left:26px;top:918px;width:1061px;height:1px;background:#6f8dc0"></div>
<div class="cell" style="left:24px;top:918px;width:68px;height:22px;line-height:27px;">A25</div>
<div class="cell" style="left:92px;top:918px;width:86px;height:22px;line-height:27px;letter-spacing:0.8px;text-indent:0.8px">小M</div>
<div class="cell" style="left:178px;top:918px;width:72px;height:22px;line-height:27px;letter-spacing:0.8px;text-indent:0.8px">男</div>
<div class="cell" style="left:250px;top:918px;width:81px;height:22px;line-height:27px;">24</div>
<div class="cell" style="left:331px;top:918px;width:146px;height:22px;line-height:27px;letter-spacing:0.8px;text-indent:0.8px">山东省青岛市</div>
<div class="cell" style="left:477px;top:918px;width:95px;height:22px;line-height:27px;letter-spacing:0.8px;text-indent:0.8px">工人</div>
<div class="cell" style="left:572px;top:918px;width:88px;height:22px;line-height:27px;">4</div>
<div class="cell" style="left:660px;top:918px;width:88px;height:22px;line-height:27px;">64</div>
<div class="cell" style="left:748px;top:918px;width:70px;height:22px;line-height:27px;letter-spacing:0.8px;text-indent:0.8px">及格</div>
<div class="cell" style="left:818px;top:918px;width:106px;height:22px;line-height:27px;">21</div>
<div class="cell" style="left:924px;top:918px;width:70px;height:22px;line-height:27px;">0</div>
<div class="cell" style="left:994px;top:918px;width:94px;height:22px;line-height:27px;">4100</div>
<div class="a" style="left:842px;top:480px;width:252px;height:132px;background:#f0f0f0;border:1px solid #7a7a7a;box-shadow:0 3px 6px rgba(0,0,0,0.22),0 4px 16px rgba(0,0,0,0.22)"></div>
<div class="a" style="left:843px;top:481px;width:250px;height:30px;background:#fff"></div>
<div class="a" style="left:851px;top:487px;font-size:13px;color:#222;line-height:16px;white-space:nowrap">Microsoft Excel</div>
<svg class="a" style="left:1071px;top:489px" width="13" height="13" viewBox="0 0 13 13"><path d="M1 1l11 11M12 1L1 12" stroke="#222" stroke-width="1.2"/></svg>
<svg class="a" style="left:860px;top:529px" width="30" height="30" viewBox="0 0 30 30"><circle cx="15" cy="15" r="15" fill="#0d6ecf"/><rect x="14" y="6" width="2.2" height="3" fill="#fff"/><rect x="14" y="11" width="2.2" height="13" fill="#fff"/></svg>
<div class="a" style="left:907px;top:535px;font-size:12px;color:#111;line-height:16px;white-space:nowrap">是否将表转换为普通区域?</div>
<div class="a" style="left:883px;top:574px;width:77px;height:28px;background:#e5f1fb;border:1px solid #0078d7"></div>
<div class="a" style="left:883px;top:580px;width:77px;text-align:center;font-size:12.5px;color:#111;line-height:16px">是(Y)</div>
<div class="a" style="left:977px;top:574px;width:77px;height:28px;background:#e1e1e1;border:1px solid #adadad"></div>
<div class="a" style="left:977px;top:580px;width:77px;text-align:center;font-size:12.5px;color:#111;line-height:16px">否(N)</div>
<svg class="a" style="left:941px;top:600px" width="14" height="22" viewBox="0 0 14 22"><path d="M1 1v16l4-4 3 7 2.5-1-3-7h5.5z" fill="#fff" stroke="#000" stroke-width="1"/></svg>
<svg class="a" style="left:800px;top:595px" width="100" height="120" viewBox="0 0 100 120"><path d="M9.5 112.5L80 23" stroke="#f01010" stroke-width="4.2" stroke-linecap="round"/><path d="M94 6L73 21.5L78 23L84 29.5z" fill="#f01010"/></svg>
<div class="a" style="left:937px;top:895px;width:153px;height:46px;background:rgba(235,235,240,0.75);border:1px solid #b8c8b8"></div>
<div class="a" style="left:1086px;top:937px;width:6px;height:6px;background:#b0c4b0"></div>
<div class="a" style="left:946px;top:898px;font-size:36.5px;font-weight:bold;color:#ee2128;line-height:42px;white-space:nowrap;letter-spacing:0">电脑技术网</div>
<div class="a" style="left:945px;top:947px;font-family:'Liberation Serif',serif;font-size:27px;font-weight:bold;color:#2a7de1;line-height:28px;white-space:nowrap">www.tagxp.com</div>
<div class="a" style="left:1142px;top:894px;width:140px;height:84px;background:rgba(40,128,248,0.92);border-radius:20px"></div>
<div class="a" style="left:1173px;top:929px;font-size:21px;color:rgba(20,80,200,0.22);line-height:26px;white-space:nowrap">极光下载站</div>
<div class="a" style="left:1174px;top:954px;font-size:17px;color:rgba(20,80,200,0.22);line-height:20px;white-space:nowrap">www.xz7.com</div>
<div class="a" style="left:1140px;top:893px;width:140px;text-align:center;font-size:72px;font-weight:bold;color:#fff;line-height:84px;transform:scaleX(0.905);transform-origin:70px 0">TAG</div>
</body></html>
